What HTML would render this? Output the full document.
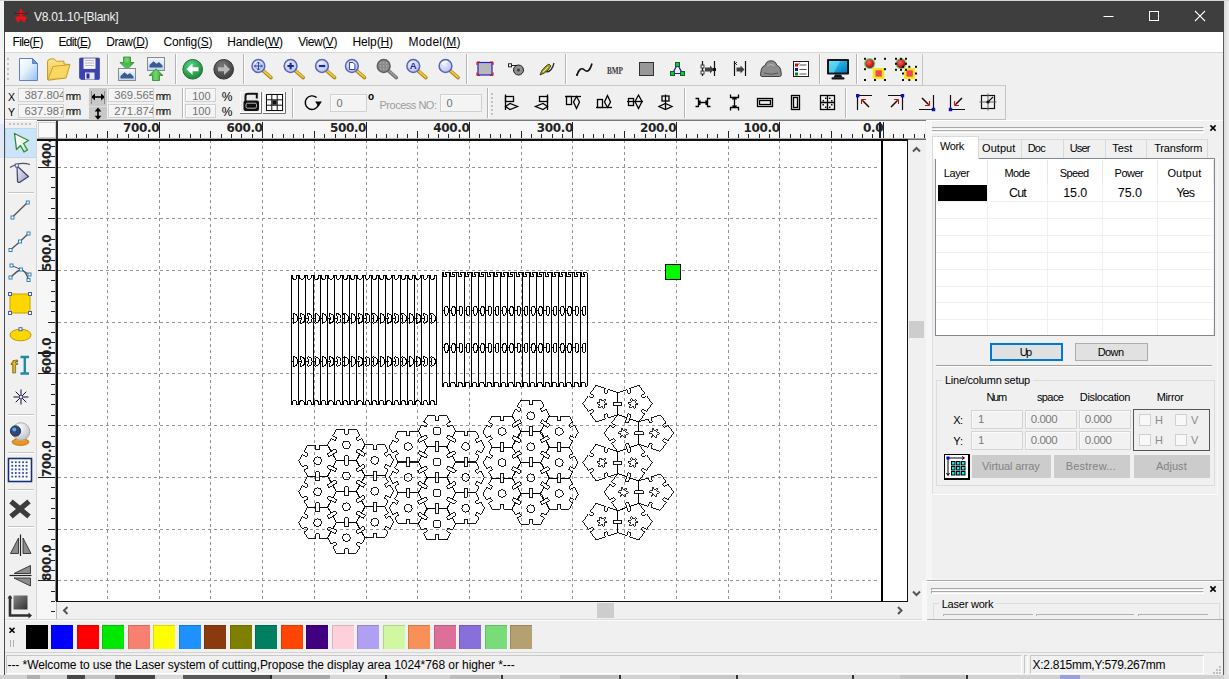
<!DOCTYPE html>
<html><head><meta charset="utf-8"><title>V8.01.10-[Blank]</title>
<style>
*{box-sizing:border-box;margin:0;padding:0}
html,body{width:1229px;height:679px;overflow:hidden;background:#ececec;font-family:"Liberation Sans",sans-serif;font-size:12px;color:#000}
.a{position:absolute}
#win{position:absolute;left:4px;top:1px;width:1220px;height:674px;background:#f0f0f0;border-left:1px solid #4a4a4a;border-right:1px solid #5a5a5a;border-bottom:1px solid #555}
#title{position:absolute;left:4px;top:1px;width:1220px;height:31px;background:#3e3e3e;color:#fff}
#title .t{position:absolute;left:30px;top:8px;font-size:12.4px;letter-spacing:0px;color:#f4f4f4}
#menu{position:absolute;left:5px;top:32px;width:1218px;height:21px;background:#fff;border-bottom:1px solid #d8d8d8}
#menu span{position:absolute;top:3px;font-size:12.4px;white-space:nowrap}
#menu u{text-decoration:underline}
.sep{position:absolute;width:1px;background:#b4b4b4;border-right:1px solid #fff;width:2px}
.inp{position:absolute;background:#f4f4f4;border:1px solid #d0d0d0;color:#707070;font-size:12.5px;overflow:hidden;white-space:nowrap;box-shadow:inset 1px 1px 0 #fafafa}
.lbl{position:absolute;white-space:nowrap}
.tab{position:absolute;top:139px;height:19px;background:#f0f0f0;border:1px solid #d9d9d9;border-bottom:none}
.btn{position:absolute;font-size:11.5px;text-align:center}
.gray{color:#838383}
</style></head>
<body>
<div class="a" style="left:0;top:0;width:1229px;height:679px;background:#efefef"></div>
<div class="a" style="left:0;top:0;width:5px;height:679px;background:#f3f3f3"></div>
<div class="a" style="left:0;top:124px;width:5px;height:34px;background:#dfeaf6"></div>
<div class="a" style="left:1224px;top:0;width:5px;height:679px;background:linear-gradient(90deg,#d8d8d8,#efefef)"></div>
<div class="a" style="left:0;top:675px;width:1229px;height:4px;background:#d2d2d2"></div>
<div class="a" style="left:27px;top:675px;width:13px;height:4px;background:#b0b0b0"></div>
<div class="a" style="left:67px;top:675px;width:18px;height:4px;background:#484848"></div>
<div class="a" style="left:85px;top:675px;width:30px;height:4px;background:#c4c4c4"></div>
<div class="a" style="left:115px;top:675px;width:40px;height:4px;background:#454545"></div>
<div class="a" style="left:157px;top:675px;width:26px;height:4px;background:#dadada"></div>
<div class="a" style="left:183px;top:675px;width:87px;height:4px;background:#585858"></div>
<div class="a" style="left:270px;top:675px;width:2px;height:4px;background:#222"></div>
<div class="a" style="left:272px;top:675px;width:58px;height:4px;background:#a8a8a8"></div>
<div class="a" style="left:330px;top:675px;width:55px;height:4px;background:#d8d8d8"></div>
<div class="a" style="left:385px;top:675px;width:2px;height:4px;background:#333"></div>
<div class="a" style="left:450px;top:675px;width:50px;height:4px;background:#bcbcbc"></div>
<div class="a" style="left:501px;top:675px;width:2px;height:4px;background:#333"></div>
<div class="a" style="left:560px;top:675px;width:58px;height:4px;background:#c0c0c0"></div>
<div class="a" style="left:619px;top:675px;width:2px;height:4px;background:#333"></div>
<div class="a" style="left:680px;top:675px;width:55px;height:4px;background:#c8c8c8"></div>
<div class="a" style="left:736px;top:675px;width:2px;height:4px;background:#333"></div>
<div class="a" style="left:852px;top:675px;width:2px;height:4px;background:#333"></div>
<div class="a" style="left:900px;top:675px;width:65px;height:4px;background:#c4c4c4"></div>
<div class="a" style="left:966px;top:675px;width:2px;height:4px;background:#333"></div>
<div class="a" style="left:1060px;top:675px;width:20px;height:4px;background:#9aa0d8"></div>
<div class="a" style="left:1224px;top:675px;width:5px;height:4px;background:#e4e4e4"></div>
<div class="a" style="left:0;top:0;width:1229px;height:1px;background:#d8d8d0"></div>
<div id="win"></div>
<div id="title"></div>
<div class="lbl" style="left:34.0px;top:10.8px;font-size:12px;line-height:1;letter-spacing:-0.279px;color:#f2f2f2;">V8.01.10-[Blank]</div>
<svg class="a" style="left:12px;top:7px" width="18" height="18" viewBox="0 0 18 18">
<path d="M9 1 L10.5 4.5 L16 6.5 L10.5 7.5 L9.5 9 L15 10 L12 16 L9.6 12 L9 15 L8.4 12 L6 16 L3 10 L8.5 9 L7.5 7.5 L2 6.5 L7.5 4.5 Z" fill="#f01018"/>
<path d="M2 6.3 L16 6.3" stroke="#3a1010" stroke-width="0.8"/></svg>
<svg class="a" style="left:1090px;top:1px" width="134" height="30" viewBox="0 0 134 30">
<path d="M13.5 15.5 H23.5" stroke="#fff" stroke-width="1"/>
<rect x="59.5" y="10.5" width="9" height="9" fill="none" stroke="#fff" stroke-width="1"/>
<path d="M105 10 L115 20 M115 10 L105 20" stroke="#fff" stroke-width="1.1"/></svg>
<div id="menu"></div>
<div class="lbl" style="left:12.5px;top:35.8px;font-size:12px;line-height:1;letter-spacing:-0.630px;color:#000;">File(<u>F</u>)</div>
<div class="lbl" style="left:58.4px;top:35.8px;font-size:12px;line-height:1;letter-spacing:-0.620px;color:#000;">Edit(<u>E</u>)</div>
<div class="lbl" style="left:106.2px;top:35.8px;font-size:12px;line-height:1;letter-spacing:-0.407px;color:#000;">Draw(<u>D</u>)</div>
<div class="lbl" style="left:163.5px;top:35.8px;font-size:12px;line-height:1;letter-spacing:-0.205px;color:#000;">Config(<u>S</u>)</div>
<div class="lbl" style="left:227.3px;top:35.8px;font-size:12px;line-height:1;letter-spacing:-0.195px;color:#000;">Handle(<u>W</u>)</div>
<div class="lbl" style="left:298.2px;top:35.8px;font-size:12px;line-height:1;letter-spacing:-0.427px;color:#000;">View(<u>V</u>)</div>
<div class="lbl" style="left:352.5px;top:35.8px;font-size:12px;line-height:1;letter-spacing:-0.130px;color:#000;">Help(<u>H</u>)</div>
<div class="lbl" style="left:408.5px;top:35.8px;font-size:12px;line-height:1;letter-spacing:0.194px;color:#000;">Model(<u>M</u>)</div>
<div class="a" style="left:5px;top:53px;width:1218px;height:67px;background:#f0f0f0"></div>
<div class="a" style="left:5px;top:85px;width:918px;height:1px;background:#c9c9c9"></div>
<div class="a" style="left:923px;top:85px;width:83px;height:1px;background:#c9c9c9"></div>
<div class="a" style="left:5px;top:119px;width:1000px;height:1px;background:#bdbdbd"></div>
<div class="a" style="left:5px;top:120px;width:1218px;height:1px;background:#fdfdfd"></div>
<div class="a" style="left:922px;top:54px;width:1px;height:31px;background:#c4c4c4"></div>
<div class="a" style="left:1005px;top:86px;width:1px;height:34px;background:#c4c4c4"></div>
<div class="a" style="left:7px;top:58px;width:2px;height:2px;background:#c2c2c2"></div>
<div class="a" style="left:7px;top:63px;width:2px;height:2px;background:#c2c2c2"></div>
<div class="a" style="left:7px;top:68px;width:2px;height:2px;background:#c2c2c2"></div>
<div class="a" style="left:7px;top:73px;width:2px;height:2px;background:#c2c2c2"></div>
<div class="a" style="left:7px;top:78px;width:2px;height:2px;background:#c2c2c2"></div>
<div class="a" style="left:491px;top:93px;width:2px;height:2px;background:#c2c2c2"></div>
<div class="a" style="left:491px;top:97px;width:2px;height:2px;background:#c2c2c2"></div>
<div class="a" style="left:491px;top:101px;width:2px;height:2px;background:#c2c2c2"></div>
<div class="a" style="left:491px;top:105px;width:2px;height:2px;background:#c2c2c2"></div>
<div class="a" style="left:491px;top:109px;width:2px;height:2px;background:#c2c2c2"></div>
<div class="a" style="left:491px;top:113px;width:2px;height:2px;background:#c2c2c2"></div>
<div class="sep" style="left:107px;top:54px;height:30px"></div>
<div class="sep" style="left:175px;top:54px;height:30px"></div>
<div class="sep" style="left:243px;top:54px;height:30px"></div>
<div class="sep" style="left:466px;top:54px;height:30px"></div>
<div class="sep" style="left:565px;top:54px;height:30px"></div>
<div class="sep" style="left:819px;top:54px;height:30px"></div>
<div class="sep" style="left:856px;top:54px;height:30px"></div>
<div class="sep" style="left:182px;top:88px;height:30px"></div>
<div class="sep" style="left:292px;top:88px;height:30px"></div>
<div class="sep" style="left:487px;top:88px;height:30px"></div>
<div class="sep" style="left:684px;top:88px;height:30px"></div>
<div class="sep" style="left:845px;top:88px;height:30px"></div>
<svg class="a" style="left:0;top:0" width="1229" height="125" viewBox="0 0 1229 125">
<defs>
<linearGradient id="docg" x1="0" y1="0" x2="1" y2="1"><stop offset="0" stop-color="#ffffff"/><stop offset="0.45" stop-color="#e4f0fc"/><stop offset="1" stop-color="#8cc0ee"/></linearGradient>
<linearGradient id="folg" x1="0" y1="0" x2="0" y2="1"><stop offset="0" stop-color="#fbe48a"/><stop offset="1" stop-color="#f0c040"/></linearGradient>
<radialGradient id="lensg" cx="0.4" cy="0.35" r="0.7"><stop offset="0" stop-color="#f0f2ff"/><stop offset="1" stop-color="#b4bcf0"/></radialGradient>
<radialGradient id="grng" cx="0.4" cy="0.3" r="0.8"><stop offset="0" stop-color="#58d088"/><stop offset="0.6" stop-color="#2ea050"/><stop offset="1" stop-color="#1c7838"/></radialGradient>
<radialGradient id="gryg" cx="0.4" cy="0.3" r="0.8"><stop offset="0" stop-color="#787878"/><stop offset="0.6" stop-color="#505050"/><stop offset="1" stop-color="#383838"/></radialGradient>
<linearGradient id="arrg" x1="0" y1="0" x2="1" y2="0"><stop offset="0" stop-color="#3aa03a"/><stop offset="0.5" stop-color="#70d868"/><stop offset="1" stop-color="#2a902a"/></linearGradient>
<linearGradient id="skyg" x1="0" y1="0" x2="0" y2="1"><stop offset="0" stop-color="#f4f8ff"/><stop offset="1" stop-color="#c0d4f0"/></linearGradient>
<linearGradient id="mong" x1="0" y1="0" x2="1" y2="1"><stop offset="0" stop-color="#50d8f8"/><stop offset="0.5" stop-color="#18a8e0"/><stop offset="1" stop-color="#0878c0"/></linearGradient>
<radialGradient id="redg" cx="0.4" cy="0.35" r="0.7"><stop offset="0" stop-color="#ff6060"/><stop offset="1" stop-color="#a00000"/></radialGradient>
</defs>
<path d="M19.5 58.5 H32.5 L37.5 63.5 V80.5 H19.5 Z" fill="url(#docg)" stroke="#6080c0" stroke-width="1"/><path d="M32.5 58.5 V63.5 H37.5 Z" fill="#6a94d8" stroke="#5070b8" stroke-width="0.8"/>
<path d="M47.5 79.5 V62 Q47.5 59.5 50 59 L54 58.8 L56.5 61.2 H64 V64 L70 64.5 L66 78 L48.5 80.2 Z" fill="url(#folg)" stroke="#c49a28" stroke-width="1"/><path d="M48 79.5 L53 66.5 L69.5 64.8" fill="none" stroke="#c49a28" stroke-width="0.9"/><path d="M49 78 L53.6 67.2 L68.6 65.6 L65.4 77.2 Z" fill="#f8d860"/>
<path d="M79.5 59 Q79.5 58 80.5 58 H98.5 Q99.5 58 99.5 59 V78.5 Q99.5 79.5 98.5 79.5 H81 L79.5 78 Z" fill="#3c42b0" stroke="#2c3090" stroke-width="0.6"/><rect x="83.5" y="58.4" width="12" height="10.5" fill="#f4f4fa"/><path d="M85 60.5 H94 M85 63 H94 M85 65.5 H94" stroke="#b8b8c8" stroke-width="1"/><rect x="85" y="72.5" width="9.5" height="7" fill="#e8e8f4"/><rect x="86.5" y="73.5" width="3" height="5" fill="#2c3090"/>
<path d="M123.5 57 H130.5 V62.5 H134 L127 69.5 L120 62.5 H123.5 Z" fill="url(#arrg)" stroke="#2a8a2a" stroke-width="0.8"/><rect x="118.5" y="68.5" width="17" height="12" fill="url(#skyg)" stroke="#8a8a8a" stroke-width="1"/><path d="M120.5 78.5 V76 L124.5 72.2 L127.5 74.8 L130 73 L133.5 76.4 V78.5 Z" fill="#3a5a90"/><path d="M123.5 62.5 H130.5 L127 68.5 Z" fill="#48b848" />
<rect x="147.5" y="57.5" width="17" height="13" fill="url(#skyg)" stroke="#8a8a8a" stroke-width="1"/><path d="M149.5 67.5 V65 L153.5 61.2 L156.5 63.8 L159 62 L162.5 65.4 V67.5 Z" fill="#3a5a90"/><path d="M152.5 80.5 H159.5 V75.5 H163 L156 68.8 L149 75.5 H152.5 Z" fill="url(#arrg)" stroke="#2a8a2a" stroke-width="0.8"/>
<circle cx="192.7" cy="69.3" r="9.8" fill="url(#grng)" stroke="#1c6c34" stroke-width="1"/><path d="M186.5 69.3 L192.5 63.5 V67.3 H198.5 V71.3 H192.5 V75.1 Z" fill="#fff"/>
<circle cx="223.7" cy="69.3" r="9.8" fill="url(#gryg)" stroke="#303030" stroke-width="1"/><path d="M230 69.3 L224 63.5 V67.3 H218 V71.3 H224 V75.1 Z" fill="#b8b8b8"/>
<g transform="translate(258.4,66)"><path d="M4.6 4.6 L12.6 11.6" stroke="#b08818" stroke-width="3.6" stroke-linecap="round"/><path d="M5.4 5 L12.4 11.2" stroke="#f0c840" stroke-width="1.8" stroke-linecap="round"/><circle cx="0" cy="0" r="6.4" fill="url(#lensg)" stroke="#5666b8" stroke-width="1.5"/><path d="M-4 0 H4 M0 -4 V4 M-4 0 l1.5 -1.5 M-4 0 l1.5 1.5 M4 0 l-1.5 -1.5 M4 0 l-1.5 1.5 M0 -4 l-1.5 1.5 M0 -4 l1.5 1.5 M0 4 l-1.5 -1.5 M0 4 l1.5 -1.5" stroke="#2040a0" stroke-width="1" fill="none"/></g>
<g transform="translate(290.6,66)"><path d="M4.6 4.6 L12.6 11.6" stroke="#b08818" stroke-width="3.6" stroke-linecap="round"/><path d="M5.4 5 L12.4 11.2" stroke="#f0c840" stroke-width="1.8" stroke-linecap="round"/><circle cx="0" cy="0" r="6.4" fill="url(#lensg)" stroke="#5666b8" stroke-width="1.5"/><path d="M-3.2 0 H3.2 M0 -3.2 V3.2" stroke="#1c2c98" stroke-width="2.2"/></g>
<g transform="translate(322,66)"><path d="M4.6 4.6 L12.6 11.6" stroke="#b08818" stroke-width="3.6" stroke-linecap="round"/><path d="M5.4 5 L12.4 11.2" stroke="#f0c840" stroke-width="1.8" stroke-linecap="round"/><circle cx="0" cy="0" r="6.4" fill="url(#lensg)" stroke="#5666b8" stroke-width="1.5"/><path d="M-3.2 0 H3.2" stroke="#1c2c98" stroke-width="2.2"/></g>
<g transform="translate(351.9,66)"><path d="M4.6 4.6 L12.6 11.6" stroke="#b08818" stroke-width="3.6" stroke-linecap="round"/><path d="M5.4 5 L12.4 11.2" stroke="#f0c840" stroke-width="1.8" stroke-linecap="round"/><circle cx="0" cy="0" r="6.4" fill="url(#lensg)" stroke="#5666b8" stroke-width="1.5"/><path d="M-2.5 -3.5 H1 L3 -1.5 V3.5 H-2.5 Z" fill="#fff" stroke="#2c3ca0" stroke-width="1"/></g>
<g transform="translate(383.7,66)"><path d="M4.6 4.6 L12.6 11.6" stroke="#707070" stroke-width="3.6" stroke-linecap="round"/><path d="M5.4 5 L12.4 11.2" stroke="#9a9a9a" stroke-width="1.8" stroke-linecap="round"/><circle cx="0" cy="0" r="6.4" fill="#8a8a8a" stroke="#606060" stroke-width="1.5"/><rect x="-3.5" y="-3.5" width="1" height="1" fill="#c8c8c8"/><rect x="-3.5" y="-0.5" width="1" height="1" fill="#c8c8c8"/><rect x="-3.5" y="2.5" width="1" height="1" fill="#c8c8c8"/><rect x="-0.5" y="-3.5" width="1" height="1" fill="#c8c8c8"/><rect x="-0.5" y="-0.5" width="1" height="1" fill="#c8c8c8"/><rect x="-0.5" y="2.5" width="1" height="1" fill="#c8c8c8"/><rect x="2.5" y="-3.5" width="1" height="1" fill="#c8c8c8"/><rect x="2.5" y="-0.5" width="1" height="1" fill="#c8c8c8"/><rect x="2.5" y="2.5" width="1" height="1" fill="#c8c8c8"/></g>
<g transform="translate(413.3,66)"><path d="M4.6 4.6 L12.6 11.6" stroke="#b08818" stroke-width="3.6" stroke-linecap="round"/><path d="M5.4 5 L12.4 11.2" stroke="#f0c840" stroke-width="1.8" stroke-linecap="round"/><circle cx="0" cy="0" r="6.4" fill="url(#lensg)" stroke="#5666b8" stroke-width="1.5"/><text x="0" y="3.4" font-family="Liberation Sans,sans-serif" font-weight="bold" font-size="9.5" text-anchor="middle" fill="#1c2c98">A</text></g>
<g transform="translate(445.5,66)"><path d="M4.6 4.6 L12.6 11.6" stroke="#b08818" stroke-width="3.6" stroke-linecap="round"/><path d="M5.4 5 L12.4 11.2" stroke="#f0c840" stroke-width="1.8" stroke-linecap="round"/><circle cx="0" cy="0" r="6.4" fill="url(#lensg)" stroke="#5666b8" stroke-width="1.5"/><path d="M-3.5 -2 Q-1 -5 2 -4" stroke="#fff" stroke-width="1.5" fill="none"/></g>
<rect x="478" y="62.5" width="14" height="12.5" fill="#b8b8b8" stroke="#2020d0" stroke-width="1.2"/><path d="M477 62 h3 M477 62 v3 M493 62 h-3 M493 62 v3 M477 75.5 h3 M477 75.5 v-3 M493 75.5 h-3 M493 75.5 v-3" stroke="#e01010" stroke-width="1.2"/>
<circle cx="518.5" cy="70" r="5" fill="#909090" stroke="#202020" stroke-width="1"/><circle cx="518.5" cy="70" r="1.6" fill="#404040"/><path d="M510 65.5 H517" stroke="#202020" stroke-width="1"/><rect x="508.5" y="63.8" width="3" height="3" fill="#fff" stroke="#202020" stroke-width="1"/>
<path d="M540 75 Q541 70 546 66 L549 64 L551 66 L548 70 Q544 74 540 75 Z" fill="#a8a020" stroke="#3a3a10" stroke-width="0.9"/><path d="M546 72 Q552 72 554 63" fill="none" stroke="#202020" stroke-width="1.2"/><path d="M543 72 L548 67" stroke="#f0f0a0" stroke-width="1"/>
<path d="M577 75 Q580 66 584.5 70 Q589 74 592 63.5" fill="none" stroke="#101010" stroke-width="1.6"/><circle cx="577" cy="75" r="1.1" fill="#101010"/>
<text x="615" y="73.5" font-family="Liberation Serif,serif" font-weight="bold" font-size="10" text-anchor="middle" fill="#383838" textLength="16" lengthAdjust="spacingAndGlyphs">BMP</text>
<rect x="639.5" y="62.5" width="14" height="13" fill="#989898" stroke="#303030" stroke-width="1"/>
<path d="M677.5 64.5 L672.5 73.5 H682.5 Z" fill="none" stroke="#1818d0" stroke-width="1.2"/><rect x="675.5" y="62.5" width="4" height="4" fill="#20c040" stroke="#106020" stroke-width="1"/><rect x="670.5" y="71.5" width="4" height="4" fill="#20c040" stroke="#106020" stroke-width="1"/><rect x="680.5" y="71.5" width="4" height="4" fill="#20c040" stroke="#106020" stroke-width="1"/>
<path d="M702.5 61 V76 M714.5 61 V76" stroke="#101010" stroke-width="1.2"/><path d="M705 67.5 H710 V65.5 L714 69.5 L710 73.5 V71.5 H705 Z" fill="#404040"/><rect x="701" y="65" width="3" height="3" fill="#fff" stroke="#101010" stroke-width="0.8"/><rect x="701" y="71" width="3" height="3" fill="#fff" stroke="#101010" stroke-width="0.8"/><rect x="713" y="68" width="3" height="3" fill="#101010"/>
<path d="M734.5 61 V76 M745.5 61 V76" stroke="#101010" stroke-width="1.2"/><path d="M736.5 67.5 H740.5 V65.5 L744.5 69.5 L740.5 73.5 V71.5 H736.5 Z" fill="#404040"/><path d="M734 62 l3 3 M737 62 l-3 3" stroke="#101010" stroke-width="0.8"/>
<path d="M762 76.5 Q760 76.5 760.5 73.5 L761.5 69 Q762.5 66 765 65.5 L766.5 62.5 Q768 60.8 771 60.8 Q774 60.8 775.5 62.5 L777 65.5 Q779.5 66 780.5 69 L781.3 73.5 Q781.8 76.5 779.5 76.5 Z" fill="#8c8c8c" stroke="#404040" stroke-width="1"/><path d="M764 73 Q771 75.5 778 73" fill="none" stroke="#505050" stroke-width="0.9"/><path d="M767.5 65.5 Q771 63.5 774.5 65.5" fill="none" stroke="#b8b8b8" stroke-width="1"/>
<rect x="793.5" y="61.5" width="15" height="15" fill="#fff" stroke="#202020" stroke-width="1"/><path d="M799.5 65 H806.5 M799.5 69.5 H806.5 M799.5 74 H806.5" stroke="#404040" stroke-width="0.9"/><rect x="795" y="63.5" width="3" height="3" fill="#c01010"/><rect x="795" y="68" width="3" height="3" fill="#1010c0"/><rect x="795" y="72.5" width="3" height="3" fill="#108010"/><path d="M795.5 64.5 l1.5 1.5 l3 -3.5" stroke="#c01010" stroke-width="0.8" fill="none"/>
<rect x="827" y="59" width="22" height="15.5" rx="1" fill="#101418"/><rect x="829" y="61" width="18" height="11.5" fill="url(#mong)"/><path d="M829 61 H840 L834 72.5 H829 Z" fill="#7ae4fc" opacity="0.55"/><path d="M835 74.5 H841 L842.5 77.5 H833.5 Z" fill="#101418"/><rect x="831.5" y="77.3" width="13" height="2.2" rx="1" fill="#101418"/>
<circle cx="869.7" cy="63.6" r="5.6" fill="#48c848" opacity="0.8"/><circle cx="869.7" cy="63.6" r="4.4" fill="url(#redg)"/><rect x="872.8" y="68" width="11.5" height="11" fill="#f8e418"/><rect x="875.5" y="70.3" width="6.3" height="6.3" fill="#f04850"/><rect x="864.0" y="57.8" width="2" height="2" fill="#101010"/><rect x="864.0" y="68.2" width="2" height="2" fill="#101010"/><rect x="864.0" y="79.0" width="2" height="2" fill="#101010"/><rect x="874.0" y="57.8" width="2" height="2" fill="#101010"/><rect x="874.0" y="79.0" width="2" height="2" fill="#101010"/><rect x="884.0" y="57.8" width="2" height="2" fill="#101010"/><rect x="884.0" y="68.2" width="2" height="2" fill="#101010"/><rect x="884.0" y="79.0" width="2" height="2" fill="#101010"/>
<circle cx="901" cy="63.6" r="5.6" fill="#48c848" opacity="0.8"/><circle cx="901" cy="63.6" r="4.4" fill="url(#redg)"/><rect x="904" y="68" width="11" height="11" fill="#f8e418"/><rect x="906.5" y="70.3" width="6.3" height="6.3" fill="#f04850"/><rect x="895.0" y="57.8" width="2" height="2" fill="#101010"/><rect x="895.0" y="62.8" width="2" height="2" fill="#101010"/><rect x="895.0" y="68.8" width="2" height="2" fill="#101010"/><rect x="900.0" y="57.8" width="2" height="2" fill="#101010"/><rect x="900.0" y="68.8" width="2" height="2" fill="#101010"/><rect x="905.0" y="57.8" width="2" height="2" fill="#101010"/><rect x="905.0" y="62.8" width="2" height="2" fill="#101010"/><rect x="905.0" y="68.8" width="2" height="2" fill="#101010"/><rect x="902.0" y="65.8" width="2" height="2" fill="#101010"/><rect x="902.0" y="72.5" width="2" height="2" fill="#101010"/><rect x="902.0" y="79.0" width="2" height="2" fill="#101010"/><rect x="908.3" y="65.8" width="2" height="2" fill="#101010"/><rect x="908.3" y="79.0" width="2" height="2" fill="#101010"/><rect x="915.0" y="65.8" width="2" height="2" fill="#101010"/><rect x="915.0" y="72.5" width="2" height="2" fill="#101010"/><rect x="915.0" y="79.0" width="2" height="2" fill="#101010"/>
<rect x="240.5" y="92.5" width="20" height="20" fill="#ececec" stroke="#fff" stroke-width="1"/><path d="M240 113.5 H261.5 V92" fill="none" stroke="#707070" stroke-width="1"/><rect x="243.5" y="100.5" width="15.5" height="10.5" rx="2" fill="#101010"/><rect x="246" y="103.2" width="10.5" height="5" rx="1.5" fill="none" stroke="#c8c8c8" stroke-width="0.9"/><path d="M245.5 101 V96 Q245.5 93.8 248 93.8 H256.8 V98.5" fill="none" stroke="#101010" stroke-width="2"/>
<rect x="263.5" y="92.5" width="21" height="20" fill="#ececec" stroke="#fff" stroke-width="1"/><path d="M263 113.5 H285.5 V92" fill="none" stroke="#707070" stroke-width="1"/><rect x="266.5" y="94.5" width="16" height="16" fill="#fff" stroke="#101010" stroke-width="1"/><path d="M271.8 94.5 V110.5 M277.2 94.5 V110.5 M266.5 99.8 H282.5 M266.5 105.2 H282.5" stroke="#101010" stroke-width="1"/><rect x="272.3" y="100.3" width="4.4" height="4.4" fill="#101010"/>
<path d="M318.3 105.3 A6.8 6.8 0 1 1 316.6 97.6" fill="none" stroke="#000" stroke-width="1.4"/><path d="M315.2 101.6 L321.8 101.6 L318.5 106.8 Z" fill="#000"/>
<g fill="none" stroke="#000" stroke-width="1.3"><path d="M505.5 94.5 V110"/><rect x="505.5" y="96.5" width="8" height="5"/><path d="M505.5 106.5 L510 103.5 L517.5 106.5 L510 109.5 Z"/></g>
<g fill="none" stroke="#000" stroke-width="1.3"><path d="M547.5 94.5 V110"/><rect x="539.5" y="96.5" width="8" height="5"/><path d="M547.5 106.5 L543 103.5 L535.5 106.5 L543 109.5 Z"/></g>
<g fill="none" stroke="#000" stroke-width="1.3"><path d="M565 96.5 H581"/><rect x="566.5" y="96.5" width="5" height="8"/><path d="M576.5 96.5 L579.5 102 L576.5 108.5 L573.5 102 Z"/></g>
<g fill="none" stroke="#000" stroke-width="1.3"><path d="M596 107.5 H612"/><rect x="597.5" y="99.5" width="5" height="8"/><path d="M607.5 107.5 L610.5 102 L607.5 95.5 L604.5 102 Z"/></g>
<g fill="none" stroke="#000" stroke-width="1.3"><path d="M627 101.5 H643"/><rect x="628.5" y="98.5" width="5" height="7"/><path d="M638.5 95 L642 101.5 L638.5 108.5 L635 101.5 Z"/></g>
<g fill="none" stroke="#000" stroke-width="1.3"><path d="M665.5 94.5 V110"/><rect x="662" y="96" width="7" height="5"/><path d="M665.5 103.5 L672 106.5 L665.5 109.5 L659 106.5 Z"/></g>
<g fill="none" stroke="#000" stroke-width="1.3"><path d="M695.5 98.5 H698.5 V106.5 H695.5 M710.5 98.5 H707.5 V106.5 H710.5 M698.5 102.5 H707.5 M700.5 100.5 L698.5 102.5 L700.5 104.5 M705.5 100.5 L707.5 102.5 L705.5 104.5"/></g>
<g fill="none" stroke="#000" stroke-width="1.3"><path d="M730.5 94.5 V97.5 H738.5 V94.5 M730.5 110.5 V107.5 H738.5 V110.5 M734.5 97.5 V107.5 M732.5 99.5 L734.5 97.5 L736.5 99.5 M732.5 105.5 L734.5 107.5 L736.5 105.5"/></g>
<g fill="none" stroke="#000" stroke-width="1.3"><rect x="757.5" y="98.5" width="15" height="8"/><rect x="759.5" y="100.5" width="11" height="4"/></g>
<g fill="none" stroke="#000" stroke-width="1.3"><rect x="791.5" y="95.5" width="8" height="14"/><rect x="793.5" y="97.5" width="4" height="10"/></g>
<g fill="none" stroke="#000" stroke-width="1.3"><rect x="820.5" y="95.5" width="14" height="14"/><path d="M827.5 95.5 V109.5 M820.5 102.5 H834.5"/></g><g fill="#101010"><rect x="822.5" y="100" width="1.5" height="1.5"/><rect x="831" y="100" width="1.5" height="1.5"/><rect x="822.5" y="104" width="1.5" height="1.5"/><rect x="831" y="104" width="1.5" height="1.5"/><rect x="825" y="97.5" width="1.5" height="1.5"/><rect x="829" y="97.5" width="1.5" height="1.5"/><rect x="825" y="106.5" width="1.5" height="1.5"/><rect x="829" y="106.5" width="1.5" height="1.5"/></g>
<path d="M857.5 110 V95.5 H872" fill="none" stroke="#101010" stroke-width="1.2"/><rect x="856" y="94" width="3.4" height="3.4" fill="#1010c0"/><path d="M869 107 L861.5 99.5 M861.5 99.5 V104 M861.5 99.5 H866" fill="none" stroke="#c01010" stroke-width="1.1"/><path d="M869 107 L863 101" stroke="#101010" stroke-width="1.1"/>
<path d="M888 95.5 H902.5 V110" fill="none" stroke="#101010" stroke-width="1.2"/><rect x="900.8" y="94" width="3.4" height="3.4" fill="#1010c0"/><path d="M891 107 L898.5 99.5 M898.5 99.5 V104 M898.5 99.5 H894" fill="none" stroke="#c01010" stroke-width="1.1"/><path d="M891 107 L897 101" stroke="#101010" stroke-width="1.1"/>
<path d="M919 109.5 H933.5 V95" fill="none" stroke="#101010" stroke-width="1.2"/><rect x="931.8" y="107.8" width="3.4" height="3.4" fill="#1010c0"/><path d="M922 98 L929.5 105.5 M929.5 105.5 V101 M929.5 105.5 H925" fill="none" stroke="#c01010" stroke-width="1.1"/><path d="M922 98 L928 104" stroke="#101010" stroke-width="1.1"/>
<path d="M950.5 95 V109.5 H965" fill="none" stroke="#101010" stroke-width="1.2"/><rect x="948.8" y="107.8" width="3.4" height="3.4" fill="#1010c0"/><path d="M962 98 L954.5 105.5 M954.5 105.5 V101 M954.5 105.5 H959" fill="none" stroke="#c01010" stroke-width="1.1"/><path d="M962 98 L956 104" stroke="#101010" stroke-width="1.1"/>
<rect x="981.5" y="95.5" width="13" height="13" fill="none" stroke="#101010" stroke-width="1.2"/><path d="M988 93.5 V110.5 M979.5 102 H996.5" stroke="#606060" stroke-width="1"/><circle cx="988" cy="102" r="1.6" fill="#101010"/><path d="M988 102 L993 97" stroke="#101010" stroke-width="1.1"/>
</svg>
<div class="lbl" style="left:7.9px;top:91.9px;font-size:10.5px;line-height:1;letter-spacing:0.000px;color:#000;">X</div>
<div class="lbl" style="left:7.9px;top:106.9px;font-size:10.5px;line-height:1;letter-spacing:0.000px;color:#000;">Y</div>
<div class="inp" style="left:18px;top:88px;width:46px;height:14px"><span style="position:absolute;left:5.5px;top:1.4px;font-size:11.3px;line-height:1;width:38.3px;overflow:hidden;">387.804</span></div>
<div class="inp" style="left:18px;top:104px;width:46px;height:14px"><span style="position:absolute;left:5.5px;top:1.0px;font-size:11.3px;line-height:1;width:38.3px;overflow:hidden;">637.987</span></div>
<div class="lbl" style="left:65.8px;top:91.5px;font-size:10px;line-height:1;letter-spacing:-1.500px;color:#000;">mm</div>
<div class="lbl" style="left:65.8px;top:107.1px;font-size:10px;line-height:1;letter-spacing:-1.500px;color:#000;">mm</div>
<div class="a" style="left:89px;top:88px;width:18px;height:32px;background:#c9c9c9"></div>
<div class="a" style="left:89px;top:106px;width:18px;height:1px;background:#dcdcdc"></div>
<svg class="a" style="left:89px;top:88px" width="18" height="32" viewBox="0 0 18 32">
<path d="M3 9 H15" stroke="#000" stroke-width="1.6" fill="none"/><path d="M2 9 L6 5.6 V12.4 Z M16 9 L12 5.6 V12.4 Z" fill="#000"/>
<path d="M2.5 3 V16 M15.5 3 V16" stroke="#8a8a8a" stroke-width="1"/>
<path d="M9 21 V30" stroke="#000" stroke-width="1.6" fill="none"/><path d="M9 19.5 L5.6 23.5 H12.4 Z M9 31.8 L5.6 27.8 H12.4 Z" fill="#000"/>
</svg>
<div class="inp" style="left:108px;top:88px;width:46px;height:14px"><span style="position:absolute;left:5.3px;top:1.4px;font-size:11.3px;line-height:1;width:38.5px;overflow:hidden;">369.565</span></div>
<div class="inp" style="left:108px;top:104px;width:46px;height:14px"><span style="position:absolute;left:5.3px;top:1.0px;font-size:11.3px;line-height:1;width:38.5px;overflow:hidden;">271.874</span></div>
<div class="lbl" style="left:155.8px;top:91.5px;font-size:10px;line-height:1;letter-spacing:-1.500px;color:#000;">mm</div>
<div class="lbl" style="left:155.8px;top:107.1px;font-size:10px;line-height:1;letter-spacing:-1.500px;color:#000;">mm</div>
<div class="inp" style="left:185px;top:88px;width:31px;height:14px"><span style="position:absolute;left:6.2px;top:1.7px;font-size:11px;line-height:1;">100</span></div>
<div class="inp" style="left:185px;top:104px;width:31px;height:14px"><span style="position:absolute;left:6.2px;top:1.3px;font-size:11px;line-height:1;">100</span></div>
<div class="lbl" style="left:221.7px;top:90.6px;font-size:12px;line-height:1;letter-spacing:0.000px;color:#000;">%</div>
<div class="lbl" style="left:221.7px;top:106.2px;font-size:12px;line-height:1;letter-spacing:0.000px;color:#000;">%</div>
<div class="inp" style="left:330px;top:94px;width:37px;height:18px"><span style="position:absolute;left:5.5px;top:3.2px;font-size:11px;line-height:1;">0</span></div>
<div class="lbl" style="left:368.0px;top:92.0px;font-size:10px;line-height:1;letter-spacing:0.000px;color:#000;font-weight:bold;">o</div>
<div class="lbl" style="left:379.5px;top:99.7px;font-size:11px;line-height:1;letter-spacing:-0.487px;color:#9c9c9c;">Process NO:</div>
<div class="inp" style="left:440px;top:94px;width:42px;height:18px"><span style="position:absolute;left:5.5px;top:3.2px;font-size:11px;line-height:1;">0</span></div>
<div class="a" style="left:5px;top:121px;width:32px;height:498px;background:#f0f0f0"></div>
<div class="a" style="left:9px;top:123px;width:2px;height:2px;background:#c2c2c2"></div>
<div class="a" style="left:13px;top:123px;width:2px;height:2px;background:#c2c2c2"></div>
<div class="a" style="left:17px;top:123px;width:2px;height:2px;background:#c2c2c2"></div>
<div class="a" style="left:21px;top:123px;width:2px;height:2px;background:#c2c2c2"></div>
<div class="a" style="left:25px;top:123px;width:2px;height:2px;background:#c2c2c2"></div>
<div class="a" style="left:29px;top:123px;width:2px;height:2px;background:#c2c2c2"></div>
<div class="a" style="left:5px;top:128px;width:32px;height:30px;background:#cce4f7;border:1px solid #bcd8ef"></div>
<svg class="a" style="left:0;top:120px" width="40" height="500" viewBox="0 120 40 500">
<defs><linearGradient id="curg" x1="0" y1="0" x2="1" y2="1"><stop offset="0" stop-color="#ffffff"/><stop offset="0.5" stop-color="#f0fff0"/><stop offset="1" stop-color="#a0e0a0"/></linearGradient>
<linearGradient id="ndg" x1="0" y1="0" x2="1" y2="1"><stop offset="0" stop-color="#f0f0ff"/><stop offset="1" stop-color="#9898c8"/></linearGradient>
<linearGradient id="sqg" x1="0" y1="0" x2="1" y2="1"><stop offset="0" stop-color="#888"/><stop offset="1" stop-color="#303030"/></linearGradient>
<radialGradient id="camg" cx="0.4" cy="0.3" r="0.8"><stop offset="0" stop-color="#ffffff"/><stop offset="1" stop-color="#b8b8c0"/></radialGradient></defs>
<path d="M14.5 133.5 L28.5 140.5 L23.5 143.5 L27.5 150 L24 152 L20.5 145.5 L16.5 149.5 Z" fill="url(#curg)" stroke="#2f8a3a" stroke-width="1.3" stroke-linejoin="round"/>
<path d="M10 167.5 Q20 161 30 164.5" fill="none" stroke="#505060" stroke-width="1.2"/><path d="M17 166 L28.5 176.5 L19.5 182.5 Q17 182.5 17.5 180 Z" fill="url(#ndg)" stroke="#404058" stroke-width="1.2" stroke-linejoin="round"/><rect x="15.3" y="164.0" width="3" height="3" fill="#fff" stroke="#5060a0" stroke-width="1"/>
<path d="M8 192.5 H34" stroke="#c4c4c4" stroke-width="1"/><path d="M8 193.5 H34" stroke="#fff" stroke-width="1"/>
<path d="M8 414.5 H34" stroke="#c4c4c4" stroke-width="1"/><path d="M8 415.5 H34" stroke="#fff" stroke-width="1"/>
<path d="M8 452.5 H34" stroke="#c4c4c4" stroke-width="1"/><path d="M8 453.5 H34" stroke="#fff" stroke-width="1"/>
<path d="M8 489.5 H34" stroke="#c4c4c4" stroke-width="1"/><path d="M8 490.5 H34" stroke="#fff" stroke-width="1"/>
<path d="M8 526.5 H34" stroke="#c4c4c4" stroke-width="1"/><path d="M8 527.5 H34" stroke="#fff" stroke-width="1"/>
<path d="M12.5 217 L27.5 202.5" stroke="#505060" stroke-width="1.3"/><rect x="11.0" y="216.0" width="3" height="3" fill="#fff" stroke="#3080b0" stroke-width="1"/><rect x="26.3" y="201.0" width="3" height="3" fill="#fff" stroke="#3080b0" stroke-width="1"/>
<path d="M10.5 250 L20 241.5 L28.5 233.5" stroke="#505060" stroke-width="1.3" fill="none"/><rect x="9.0" y="248.5" width="3" height="3" fill="#fff" stroke="#3080b0" stroke-width="1"/><rect x="18.5" y="240.0" width="3" height="3" fill="#fff" stroke="#3080b0" stroke-width="1"/><rect x="27.0" y="232.0" width="3" height="3" fill="#fff" stroke="#3080b0" stroke-width="1"/>
<path d="M10.5 277.5 Q18 270 21 269.5 Q26 271 28.5 280" stroke="#505060" stroke-width="1.3" fill="none"/><path d="M11.5 265.5 L21 269.5 L29.5 274.5" stroke="#505060" stroke-width="1" fill="none"/><rect x="9.0" y="276.0" width="3" height="3" fill="#fff" stroke="#3080b0" stroke-width="1"/><rect x="10.0" y="264.0" width="3" height="3" fill="#fff" stroke="#3080b0" stroke-width="1"/><rect x="19.5" y="268.0" width="3" height="3" fill="#fff" stroke="#3080b0" stroke-width="1"/><rect x="28.0" y="273.0" width="3" height="3" fill="#fff" stroke="#3080b0" stroke-width="1"/><rect x="27.0" y="278.5" width="3" height="3" fill="#fff" stroke="#3080b0" stroke-width="1"/>
<rect x="10" y="294" width="20" height="19" fill="#ffd700" stroke="#c8a000" stroke-width="1"/><rect x="8.5" y="292.5" width="3" height="3" fill="#fff" stroke="#4060c0" stroke-width="1"/><rect x="28.5" y="292.5" width="3" height="3" fill="#fff" stroke="#4060c0" stroke-width="1"/><rect x="8.5" y="311.5" width="3" height="3" fill="#fff" stroke="#4060c0" stroke-width="1"/><rect x="28.5" y="311.5" width="3" height="3" fill="#fff" stroke="#4060c0" stroke-width="1"/>
<ellipse cx="20.5" cy="335" rx="10.5" ry="5.8" fill="#ffd700" stroke="#c89000" stroke-width="1"/><rect x="19.0" y="327.7" width="3" height="3" fill="#fff" stroke="#4060c0" stroke-width="1"/>
<text x="11" y="373" font-family="Liberation Sans,sans-serif" font-weight="bold" font-size="19" fill="#f0c818" stroke="#504000" stroke-width="0.7">f</text><path d="M20.5 357 H29 M20.5 373.5 H29 M24.8 357 V373.5" stroke="#2088a8" stroke-width="2.4" fill="none"/>
<path d="M21 389.5 V404.5 M13.5 397 H28.5 M15.7 391.7 L26.3 402.3 M26.3 391.7 L15.7 402.3" stroke="#101030" stroke-width="1"/><circle cx="21" cy="397" r="1.6" fill="#fff" stroke="#4040a0" stroke-width="0.8"/>
<ellipse cx="20.5" cy="442" rx="8.5" ry="3.4" fill="#e89820" stroke="#b06c10" stroke-width="0.8"/><rect x="16.5" y="436" width="8" height="5" fill="#f0a830"/><circle cx="21" cy="431.5" r="8.8" fill="url(#camg)" stroke="#a0a0a8" stroke-width="0.8"/><circle cx="15.5" cy="431" r="5.2" fill="#304878" stroke="#182848" stroke-width="0.8"/><circle cx="14.3" cy="429.6" r="2" fill="#60a8e8"/>
<rect x="8.5" y="458.5" width="23" height="23" fill="#fff" stroke="#183078" stroke-width="1.6"/>
<rect x="11.3" y="461.3" width="1.8" height="1.8" fill="#2848b0"/><rect x="11.3" y="464.9" width="1.8" height="1.8" fill="#2848b0"/><rect x="11.3" y="468.5" width="1.8" height="1.8" fill="#2848b0"/><rect x="11.3" y="472.1" width="1.8" height="1.8" fill="#2848b0"/><rect x="11.3" y="475.7" width="1.8" height="1.8" fill="#2848b0"/><rect x="14.9" y="461.3" width="1.8" height="1.8" fill="#2848b0"/><rect x="14.9" y="464.9" width="1.8" height="1.8" fill="#2848b0"/><rect x="14.9" y="468.5" width="1.8" height="1.8" fill="#2848b0"/><rect x="14.9" y="472.1" width="1.8" height="1.8" fill="#2848b0"/><rect x="14.9" y="475.7" width="1.8" height="1.8" fill="#2848b0"/><rect x="18.5" y="461.3" width="1.8" height="1.8" fill="#2848b0"/><rect x="18.5" y="464.9" width="1.8" height="1.8" fill="#2848b0"/><rect x="18.5" y="468.5" width="1.8" height="1.8" fill="#2848b0"/><rect x="18.5" y="472.1" width="1.8" height="1.8" fill="#2848b0"/><rect x="18.5" y="475.7" width="1.8" height="1.8" fill="#2848b0"/><rect x="22.1" y="461.3" width="1.8" height="1.8" fill="#2848b0"/><rect x="22.1" y="464.9" width="1.8" height="1.8" fill="#2848b0"/><rect x="22.1" y="468.5" width="1.8" height="1.8" fill="#2848b0"/><rect x="22.1" y="472.1" width="1.8" height="1.8" fill="#2848b0"/><rect x="22.1" y="475.7" width="1.8" height="1.8" fill="#2848b0"/><rect x="25.7" y="461.3" width="1.8" height="1.8" fill="#2848b0"/><rect x="25.7" y="464.9" width="1.8" height="1.8" fill="#2848b0"/><rect x="25.7" y="468.5" width="1.8" height="1.8" fill="#2848b0"/><rect x="25.7" y="472.1" width="1.8" height="1.8" fill="#2848b0"/><rect x="25.7" y="475.7" width="1.8" height="1.8" fill="#2848b0"/>
<path d="M11 501.5 L29 516.5 M29 501.5 L11 516.5" stroke="#3c3c3c" stroke-width="5.2" stroke-linecap="butt"/>
<path d="M20.5 534.5 V556" stroke="#202020" stroke-width="1.2"/><path d="M18.5 538 V553.5 H10.5 Z" fill="#8c8c8c" stroke="#303030" stroke-width="0.9"/><path d="M23 538 V553.5 H31 Z" fill="#8c8c8c" stroke="#303030" stroke-width="0.9"/>
<path d="M9.5 575.5 H31.5" stroke="#202020" stroke-width="1.2"/><path d="M30.5 573.5 H14 L30.5 565.5 Z" fill="#8c8c8c" stroke="#303030" stroke-width="0.9"/><path d="M30.5 578 H14 L30.5 586 Z" fill="#8c8c8c" stroke="#303030" stroke-width="0.9"/>
<rect x="13.5" y="595.5" width="14" height="14" fill="url(#sqg)"/><path d="M10 596 V615.5 H30" fill="none" stroke="#303030" stroke-width="2.6"/><path d="M28.5 612.5 L32 615.5 L28.5 618.5 Z M7.5 598.5 L10 595 L12.5 598.5 Z" fill="#303030"/>
</svg>
<div class="a" style="left:37px;top:121px;width:888px;height:18px;background:#f7f7f7"></div>
<div class="a" style="left:37px;top:139px;width:20px;height:463px;background:#f7f7f7"></div>
<div class="a" style="left:36px;top:121px;width:1px;height:498px;background:#d4d4d4"></div>
<div class="a" style="left:37px;top:602px;width:19px;height:17px;background:#f7f7f7"></div>
<div class="a" style="left:56px;top:602px;width:1px;height:17px;background:#b8b8b8"></div>
<div class="a" style="left:38px;top:122px;width:18px;height:16px;background:#fafafa;border:1px solid #cfcfcf"></div>
<div class="a" style="left:56px;top:139px;width:852px;height:463px;background:#fff;border:1px solid #111;border-left-width:2px;border-top-width:2px"></div>
<svg class="a" style="left:0;top:0" width="1229" height="679" viewBox="0 0 1229 679" shape-rendering="crispEdges">
<rect x="924" y="134" width="1" height="4" fill="#222"/>
<rect x="914" y="134" width="1" height="4" fill="#222"/>
<rect x="903" y="134" width="1" height="4" fill="#222"/>
<rect x="893" y="134" width="1" height="4" fill="#222"/>
<rect x="883" y="122" width="1" height="16" fill="#222"/>
<rect x="872" y="134" width="1" height="4" fill="#222"/>
<rect x="862" y="134" width="1" height="4" fill="#222"/>
<rect x="852" y="134" width="1" height="4" fill="#222"/>
<rect x="841" y="134" width="1" height="4" fill="#222"/>
<rect x="831" y="131" width="1" height="7" fill="#222"/>
<rect x="821" y="134" width="1" height="4" fill="#222"/>
<rect x="810" y="134" width="1" height="4" fill="#222"/>
<rect x="800" y="134" width="1" height="4" fill="#222"/>
<rect x="790" y="134" width="1" height="4" fill="#222"/>
<rect x="779" y="122" width="1" height="16" fill="#222"/>
<rect x="769" y="134" width="1" height="4" fill="#222"/>
<rect x="759" y="134" width="1" height="4" fill="#222"/>
<rect x="748" y="134" width="1" height="4" fill="#222"/>
<rect x="738" y="134" width="1" height="4" fill="#222"/>
<rect x="728" y="131" width="1" height="7" fill="#222"/>
<rect x="717" y="134" width="1" height="4" fill="#222"/>
<rect x="707" y="134" width="1" height="4" fill="#222"/>
<rect x="697" y="134" width="1" height="4" fill="#222"/>
<rect x="686" y="134" width="1" height="4" fill="#222"/>
<rect x="676" y="122" width="1" height="16" fill="#222"/>
<rect x="665" y="134" width="1" height="4" fill="#222"/>
<rect x="655" y="134" width="1" height="4" fill="#222"/>
<rect x="645" y="134" width="1" height="4" fill="#222"/>
<rect x="634" y="134" width="1" height="4" fill="#222"/>
<rect x="624" y="131" width="1" height="7" fill="#222"/>
<rect x="614" y="134" width="1" height="4" fill="#222"/>
<rect x="603" y="134" width="1" height="4" fill="#222"/>
<rect x="593" y="134" width="1" height="4" fill="#222"/>
<rect x="583" y="134" width="1" height="4" fill="#222"/>
<rect x="572" y="122" width="1" height="16" fill="#222"/>
<rect x="562" y="134" width="1" height="4" fill="#222"/>
<rect x="552" y="134" width="1" height="4" fill="#222"/>
<rect x="541" y="134" width="1" height="4" fill="#222"/>
<rect x="531" y="134" width="1" height="4" fill="#222"/>
<rect x="521" y="131" width="1" height="7" fill="#222"/>
<rect x="510" y="134" width="1" height="4" fill="#222"/>
<rect x="500" y="134" width="1" height="4" fill="#222"/>
<rect x="490" y="134" width="1" height="4" fill="#222"/>
<rect x="479" y="134" width="1" height="4" fill="#222"/>
<rect x="469" y="122" width="1" height="16" fill="#222"/>
<rect x="459" y="134" width="1" height="4" fill="#222"/>
<rect x="448" y="134" width="1" height="4" fill="#222"/>
<rect x="438" y="134" width="1" height="4" fill="#222"/>
<rect x="428" y="134" width="1" height="4" fill="#222"/>
<rect x="417" y="131" width="1" height="7" fill="#222"/>
<rect x="407" y="134" width="1" height="4" fill="#222"/>
<rect x="397" y="134" width="1" height="4" fill="#222"/>
<rect x="386" y="134" width="1" height="4" fill="#222"/>
<rect x="376" y="134" width="1" height="4" fill="#222"/>
<rect x="366" y="122" width="1" height="16" fill="#222"/>
<rect x="355" y="134" width="1" height="4" fill="#222"/>
<rect x="345" y="134" width="1" height="4" fill="#222"/>
<rect x="335" y="134" width="1" height="4" fill="#222"/>
<rect x="324" y="134" width="1" height="4" fill="#222"/>
<rect x="314" y="131" width="1" height="7" fill="#222"/>
<rect x="303" y="134" width="1" height="4" fill="#222"/>
<rect x="293" y="134" width="1" height="4" fill="#222"/>
<rect x="283" y="134" width="1" height="4" fill="#222"/>
<rect x="272" y="134" width="1" height="4" fill="#222"/>
<rect x="262" y="122" width="1" height="16" fill="#222"/>
<rect x="252" y="134" width="1" height="4" fill="#222"/>
<rect x="241" y="134" width="1" height="4" fill="#222"/>
<rect x="231" y="134" width="1" height="4" fill="#222"/>
<rect x="221" y="134" width="1" height="4" fill="#222"/>
<rect x="210" y="131" width="1" height="7" fill="#222"/>
<rect x="200" y="134" width="1" height="4" fill="#222"/>
<rect x="190" y="134" width="1" height="4" fill="#222"/>
<rect x="179" y="134" width="1" height="4" fill="#222"/>
<rect x="169" y="134" width="1" height="4" fill="#222"/>
<rect x="159" y="122" width="1" height="16" fill="#222"/>
<rect x="148" y="134" width="1" height="4" fill="#222"/>
<rect x="138" y="134" width="1" height="4" fill="#222"/>
<rect x="128" y="134" width="1" height="4" fill="#222"/>
<rect x="117" y="134" width="1" height="4" fill="#222"/>
<rect x="107" y="131" width="1" height="7" fill="#222"/>
<rect x="97" y="134" width="1" height="4" fill="#222"/>
<rect x="86" y="134" width="1" height="4" fill="#222"/>
<rect x="76" y="134" width="1" height="4" fill="#222"/>
<rect x="66" y="134" width="1" height="4" fill="#222"/>
<rect x="51" y="146" width="4" height="1" fill="#222"/>
<rect x="51" y="156" width="4" height="1" fill="#222"/>
<rect x="38" y="167" width="18" height="1" fill="#222"/>
<rect x="51" y="177" width="4" height="1" fill="#222"/>
<rect x="51" y="187" width="4" height="1" fill="#222"/>
<rect x="51" y="198" width="4" height="1" fill="#222"/>
<rect x="51" y="208" width="4" height="1" fill="#222"/>
<rect x="48" y="218" width="7" height="1" fill="#222"/>
<rect x="51" y="229" width="4" height="1" fill="#222"/>
<rect x="51" y="239" width="4" height="1" fill="#222"/>
<rect x="51" y="249" width="4" height="1" fill="#222"/>
<rect x="51" y="260" width="4" height="1" fill="#222"/>
<rect x="38" y="270" width="18" height="1" fill="#222"/>
<rect x="51" y="280" width="4" height="1" fill="#222"/>
<rect x="51" y="291" width="4" height="1" fill="#222"/>
<rect x="51" y="301" width="4" height="1" fill="#222"/>
<rect x="51" y="311" width="4" height="1" fill="#222"/>
<rect x="48" y="322" width="7" height="1" fill="#222"/>
<rect x="51" y="332" width="4" height="1" fill="#222"/>
<rect x="51" y="342" width="4" height="1" fill="#222"/>
<rect x="51" y="353" width="4" height="1" fill="#222"/>
<rect x="51" y="363" width="4" height="1" fill="#222"/>
<rect x="38" y="373" width="18" height="1" fill="#222"/>
<rect x="51" y="384" width="4" height="1" fill="#222"/>
<rect x="51" y="394" width="4" height="1" fill="#222"/>
<rect x="51" y="404" width="4" height="1" fill="#222"/>
<rect x="51" y="415" width="4" height="1" fill="#222"/>
<rect x="48" y="425" width="7" height="1" fill="#222"/>
<rect x="51" y="436" width="4" height="1" fill="#222"/>
<rect x="51" y="446" width="4" height="1" fill="#222"/>
<rect x="51" y="456" width="4" height="1" fill="#222"/>
<rect x="51" y="467" width="4" height="1" fill="#222"/>
<rect x="38" y="477" width="18" height="1" fill="#222"/>
<rect x="51" y="487" width="4" height="1" fill="#222"/>
<rect x="51" y="498" width="4" height="1" fill="#222"/>
<rect x="51" y="508" width="4" height="1" fill="#222"/>
<rect x="51" y="518" width="4" height="1" fill="#222"/>
<rect x="48" y="529" width="7" height="1" fill="#222"/>
<rect x="51" y="539" width="4" height="1" fill="#222"/>
<rect x="51" y="549" width="4" height="1" fill="#222"/>
<rect x="51" y="560" width="4" height="1" fill="#222"/>
<rect x="51" y="570" width="4" height="1" fill="#222"/>
<rect x="38" y="580" width="18" height="1" fill="#222"/>
<rect x="51" y="591" width="4" height="1" fill="#222"/>
<rect x="51" y="601" width="4" height="1" fill="#222"/>
<rect x="51" y="611" width="4" height="1" fill="#222"/>
<rect x="879" y="122" width="2" height="16" fill="#1a1a2a"/>
<rect x="38" y="352" width="17" height="2" fill="#1a1a2a"/>
<path d="M831.5 141 V600" stroke="#949494" stroke-width="1" stroke-dasharray="3 3" stroke-dashoffset="1"/>
<path d="M779.5 141 V600" stroke="#949494" stroke-width="1" stroke-dasharray="3 3" stroke-dashoffset="1"/>
<path d="M728.5 141 V600" stroke="#949494" stroke-width="1" stroke-dasharray="3 3" stroke-dashoffset="1"/>
<path d="M676.5 141 V600" stroke="#949494" stroke-width="1" stroke-dasharray="3 3" stroke-dashoffset="1"/>
<path d="M624.5 141 V600" stroke="#949494" stroke-width="1" stroke-dasharray="3 3" stroke-dashoffset="1"/>
<path d="M572.5 141 V600" stroke="#949494" stroke-width="1" stroke-dasharray="3 3" stroke-dashoffset="1"/>
<path d="M521.5 141 V600" stroke="#949494" stroke-width="1" stroke-dasharray="3 3" stroke-dashoffset="1"/>
<path d="M469.5 141 V600" stroke="#949494" stroke-width="1" stroke-dasharray="3 3" stroke-dashoffset="1"/>
<path d="M417.5 141 V600" stroke="#949494" stroke-width="1" stroke-dasharray="3 3" stroke-dashoffset="1"/>
<path d="M366.5 141 V600" stroke="#949494" stroke-width="1" stroke-dasharray="3 3" stroke-dashoffset="1"/>
<path d="M314.5 141 V600" stroke="#949494" stroke-width="1" stroke-dasharray="3 3" stroke-dashoffset="1"/>
<path d="M262.5 141 V600" stroke="#949494" stroke-width="1" stroke-dasharray="3 3" stroke-dashoffset="1"/>
<path d="M210.5 141 V600" stroke="#949494" stroke-width="1" stroke-dasharray="3 3" stroke-dashoffset="1"/>
<path d="M159.5 141 V600" stroke="#949494" stroke-width="1" stroke-dasharray="3 3" stroke-dashoffset="1"/>
<path d="M107.5 141 V600" stroke="#949494" stroke-width="1" stroke-dasharray="3 3" stroke-dashoffset="1"/>
<path d="M58 167.5 H880" stroke="#949494" stroke-width="1" stroke-dasharray="3 3"/>
<path d="M58 218.5 H880" stroke="#949494" stroke-width="1" stroke-dasharray="3 3"/>
<path d="M58 270.5 H880" stroke="#949494" stroke-width="1" stroke-dasharray="3 3"/>
<path d="M58 322.5 H880" stroke="#949494" stroke-width="1" stroke-dasharray="3 3"/>
<path d="M58 373.5 H880" stroke="#949494" stroke-width="1" stroke-dasharray="3 3"/>
<path d="M58 425.5 H880" stroke="#949494" stroke-width="1" stroke-dasharray="3 3"/>
<path d="M58 477.5 H880" stroke="#949494" stroke-width="1" stroke-dasharray="3 3"/>
<path d="M58 529.5 H880" stroke="#949494" stroke-width="1" stroke-dasharray="3 3"/>
<path d="M58 580.5 H880" stroke="#949494" stroke-width="1" stroke-dasharray="3 3"/>
<rect x="881" y="141" width="2" height="460" fill="#000"/>
</svg>
<div class="lbl" style="right:345.8px;top:120.5px;font-family:'DejaVu Sans','Liberation Sans',sans-serif;font-weight:bold;font-size:12px;color:#222;letter-spacing:-0.35px">0.0</div>
<div class="lbl" style="right:449.2px;top:120.5px;font-family:'DejaVu Sans','Liberation Sans',sans-serif;font-weight:bold;font-size:12px;color:#222;letter-spacing:-0.35px">100.0</div>
<div class="lbl" style="right:552.7px;top:120.5px;font-family:'DejaVu Sans','Liberation Sans',sans-serif;font-weight:bold;font-size:12px;color:#222;letter-spacing:-0.35px">200.0</div>
<div class="lbl" style="right:656.1px;top:120.5px;font-family:'DejaVu Sans','Liberation Sans',sans-serif;font-weight:bold;font-size:12px;color:#222;letter-spacing:-0.35px">300.0</div>
<div class="lbl" style="right:759.5px;top:120.5px;font-family:'DejaVu Sans','Liberation Sans',sans-serif;font-weight:bold;font-size:12px;color:#222;letter-spacing:-0.35px">400.0</div>
<div class="lbl" style="right:862.9px;top:120.5px;font-family:'DejaVu Sans','Liberation Sans',sans-serif;font-weight:bold;font-size:12px;color:#222;letter-spacing:-0.35px">500.0</div>
<div class="lbl" style="right:966.4px;top:120.5px;font-family:'DejaVu Sans','Liberation Sans',sans-serif;font-weight:bold;font-size:12px;color:#222;letter-spacing:-0.35px">600.0</div>
<div class="lbl" style="right:1069.8px;top:120.5px;font-family:'DejaVu Sans','Liberation Sans',sans-serif;font-weight:bold;font-size:12px;color:#222;letter-spacing:-0.35px">700.0</div>
<div class="lbl" style="left:40px;top:167.1px;transform-origin:0 0;transform:rotate(-90deg);font-family:'DejaVu Sans','Liberation Sans',sans-serif;font-weight:bold;font-size:12px;color:#222;letter-spacing:-0.35px">400.0</div>
<div class="lbl" style="left:40px;top:270.5px;transform-origin:0 0;transform:rotate(-90deg);font-family:'DejaVu Sans','Liberation Sans',sans-serif;font-weight:bold;font-size:12px;color:#222;letter-spacing:-0.35px">500.0</div>
<div class="lbl" style="left:40px;top:374.0px;transform-origin:0 0;transform:rotate(-90deg);font-family:'DejaVu Sans','Liberation Sans',sans-serif;font-weight:bold;font-size:12px;color:#222;letter-spacing:-0.35px">600.0</div>
<div class="lbl" style="left:40px;top:477.4px;transform-origin:0 0;transform:rotate(-90deg);font-family:'DejaVu Sans','Liberation Sans',sans-serif;font-weight:bold;font-size:12px;color:#222;letter-spacing:-0.35px">700.0</div>
<div class="lbl" style="left:40px;top:580.8px;transform-origin:0 0;transform:rotate(-90deg);font-family:'DejaVu Sans','Liberation Sans',sans-serif;font-weight:bold;font-size:12px;color:#222;letter-spacing:-0.35px">800.0</div>
<div class="a" style="left:37px;top:121px;width:20px;height:17px;background:#f7f7f7"></div>
<div class="a" style="left:38px;top:122px;width:18px;height:16px;background:#fafafa;border:1px solid #cfcfcf"></div>
<div class="a" style="left:37px;top:139px;width:20px;height:2px;background:#111"></div>
<div class="a" style="left:908px;top:139px;width:18px;height:1px;background:#666;z-index:5"></div>
<div class="a" style="left:37px;top:138px;width:889px;height:1px;background:#b0b0b0"></div>
<div class="a" style="left:55px;top:141px;width:1px;height:460px;background:#8a8a8a"></div>
<div class="a" style="left:56px;top:121px;width:2px;height:18px;background:#333"></div>
<div class="a" style="left:37px;top:120px;width:21px;height:1px;background:#555"></div>
<div class="a" style="left:58px;top:120px;width:868px;height:1px;background:#7a7a7a"></div>
<svg class="a" style="left:0;top:0" width="1229" height="679" viewBox="0 0 1229 679" shape-rendering="crispEdges">
<path d="M291.50 275.40 V404.50 M298.75 275.40 V404.50 M305.99 275.40 V404.50 M313.24 275.40 V404.50 M320.48 275.40 V404.50 M327.73 275.40 V404.50 M334.97 275.40 V404.50 M342.21 275.40 V404.50 M349.46 275.40 V404.50 M356.70 275.40 V404.50 M363.95 275.40 V404.50 M371.19 275.40 V404.50 M378.44 275.40 V404.50 M385.69 275.40 V404.50 M392.93 275.40 V404.50 M400.17 275.40 V404.50 M407.42 275.40 V404.50 M414.66 275.40 V404.50 M421.91 275.40 V404.50 M429.15 275.40 V404.50 M436.40 275.40 V404.50 M291.50 275.40 L292.70 275.40 L292.70 278.40 Q295.12 280.90 296.94 277.60 L296.94 275.40 L298.75 275.40 M291.50 404.50 L292.70 404.50 L292.70 401.50 Q295.12 399.00 296.94 402.30 L296.94 404.50 L298.75 404.50 M293.10 313.40 Q298.14 314.40 297.55 318.40 Q298.14 322.40 293.10 323.40 M293.10 313.40 Q294.90 318.40 293.10 323.40 M291.50 318.40 H293.90 M293.10 356.50 Q298.14 357.50 297.55 361.50 Q298.14 365.50 293.10 366.50 M293.10 356.50 Q294.90 361.50 293.10 366.50 M291.50 361.50 H293.90 M298.75 275.40 L299.94 275.40 L299.94 278.40 Q302.37 280.90 304.19 277.60 L304.19 275.40 L305.99 275.40 M298.75 404.50 L299.94 404.50 L299.94 401.50 Q302.37 399.00 304.19 402.30 L304.19 404.50 L305.99 404.50 M300.35 313.40 Q305.39 314.40 304.79 318.40 Q305.39 322.40 300.35 323.40 M300.35 313.40 Q302.14 318.40 300.35 323.40 M298.75 318.40 H301.14 M300.35 356.50 Q305.39 357.50 304.79 361.50 Q305.39 365.50 300.35 366.50 M300.35 356.50 Q302.14 361.50 300.35 366.50 M298.75 361.50 H301.14 M305.99 275.40 L307.19 275.40 L307.19 278.40 Q309.61 280.90 311.44 277.60 L311.44 275.40 L313.24 275.40 M305.99 404.50 L307.19 404.50 L307.19 401.50 Q309.61 399.00 311.44 402.30 L311.44 404.50 L313.24 404.50 M307.59 313.40 Q312.63 314.40 312.04 318.40 Q312.63 322.40 307.59 323.40 M307.59 313.40 Q309.39 318.40 307.59 323.40 M305.99 318.40 H308.39 M307.59 356.50 Q312.63 357.50 312.04 361.50 Q312.63 365.50 307.59 366.50 M307.59 356.50 Q309.39 361.50 307.59 366.50 M305.99 361.50 H308.39 M313.24 275.40 L314.44 275.40 L314.44 278.40 Q316.86 280.90 318.68 277.60 L318.68 275.40 L320.48 275.40 M313.24 404.50 L314.44 404.50 L314.44 401.50 Q316.86 399.00 318.68 402.30 L318.68 404.50 L320.48 404.50 M314.84 313.40 Q319.88 314.40 319.28 318.40 Q319.88 322.40 314.84 323.40 M314.84 313.40 Q316.63 318.40 314.84 323.40 M313.24 318.40 H315.63 M314.84 356.50 Q319.88 357.50 319.28 361.50 Q319.88 365.50 314.84 366.50 M314.84 356.50 Q316.63 361.50 314.84 366.50 M313.24 361.50 H315.63 M320.48 275.40 L321.68 275.40 L321.68 278.40 Q324.10 280.90 325.93 277.60 L325.93 275.40 L327.73 275.40 M320.48 404.50 L321.68 404.50 L321.68 401.50 Q324.10 399.00 325.93 402.30 L325.93 404.50 L327.73 404.50 M322.08 313.40 Q327.12 314.40 326.53 318.40 Q327.12 322.40 322.08 323.40 M322.08 313.40 Q323.88 318.40 322.08 323.40 M320.48 318.40 H322.88 M322.08 356.50 Q327.12 357.50 326.53 361.50 Q327.12 365.50 322.08 366.50 M322.08 356.50 Q323.88 361.50 322.08 366.50 M320.48 361.50 H322.88 M327.73 275.40 L328.93 275.40 L328.93 278.40 Q331.35 280.90 333.17 277.60 L333.17 275.40 L334.97 275.40 M327.73 404.50 L328.93 404.50 L328.93 401.50 Q331.35 399.00 333.17 402.30 L333.17 404.50 L334.97 404.50 M329.33 313.40 Q334.37 314.40 333.77 318.40 Q334.37 322.40 329.33 323.40 M329.33 313.40 Q331.12 318.40 329.33 323.40 M327.73 318.40 H330.12 M329.33 356.50 Q334.37 357.50 333.77 361.50 Q334.37 365.50 329.33 366.50 M329.33 356.50 Q331.12 361.50 329.33 366.50 M327.73 361.50 H330.12 M334.97 275.40 L336.17 275.40 L336.17 278.40 Q338.59 280.90 340.42 277.60 L340.42 275.40 L342.22 275.40 M334.97 404.50 L336.17 404.50 L336.17 401.50 Q338.59 399.00 340.42 402.30 L340.42 404.50 L342.22 404.50 M336.57 313.40 Q341.62 314.40 341.02 318.40 Q341.62 322.40 336.57 323.40 M336.57 313.40 Q338.37 318.40 336.57 323.40 M334.97 318.40 H337.37 M336.57 356.50 Q341.62 357.50 341.02 361.50 Q341.62 365.50 336.57 366.50 M336.57 356.50 Q338.37 361.50 336.57 366.50 M334.97 361.50 H337.37 M342.21 275.40 L343.41 275.40 L343.41 278.40 Q345.84 280.90 347.66 277.60 L347.66 275.40 L349.46 275.40 M342.21 404.50 L343.41 404.50 L343.41 401.50 Q345.84 399.00 347.66 402.30 L347.66 404.50 L349.46 404.50 M343.81 313.40 Q348.86 314.40 348.26 318.40 Q348.86 322.40 343.81 323.40 M343.81 313.40 Q345.61 318.40 343.81 323.40 M342.21 318.40 H344.61 M343.81 356.50 Q348.86 357.50 348.26 361.50 Q348.86 365.50 343.81 366.50 M343.81 356.50 Q345.61 361.50 343.81 366.50 M342.21 361.50 H344.61 M349.46 275.40 L350.66 275.40 L350.66 278.40 Q353.08 280.90 354.90 277.60 L354.90 275.40 L356.70 275.40 M349.46 404.50 L350.66 404.50 L350.66 401.50 Q353.08 399.00 354.90 402.30 L354.90 404.50 L356.70 404.50 M351.06 313.40 Q356.10 314.40 355.50 318.40 Q356.10 322.40 351.06 323.40 M351.06 313.40 Q352.86 318.40 351.06 323.40 M349.46 318.40 H351.86 M351.06 356.50 Q356.10 357.50 355.50 361.50 Q356.10 365.50 351.06 366.50 M351.06 356.50 Q352.86 361.50 351.06 366.50 M349.46 361.50 H351.86 M356.70 275.40 L357.90 275.40 L357.90 278.40 Q360.33 280.90 362.15 277.60 L362.15 275.40 L363.95 275.40 M356.70 404.50 L357.90 404.50 L357.90 401.50 Q360.33 399.00 362.15 402.30 L362.15 404.50 L363.95 404.50 M358.31 313.40 Q363.35 314.40 362.75 318.40 Q363.35 322.40 358.31 323.40 M358.31 313.40 Q360.10 318.40 358.31 323.40 M356.70 318.40 H359.10 M358.31 356.50 Q363.35 357.50 362.75 361.50 Q363.35 365.50 358.31 366.50 M358.31 356.50 Q360.10 361.50 358.31 366.50 M356.70 361.50 H359.10 M363.95 275.40 L365.15 275.40 L365.15 278.40 Q367.57 280.90 369.39 277.60 L369.39 275.40 L371.19 275.40 M363.95 404.50 L365.15 404.50 L365.15 401.50 Q367.57 399.00 369.39 402.30 L369.39 404.50 L371.19 404.50 M365.55 313.40 Q370.59 314.40 370.00 318.40 Q370.59 322.40 365.55 323.40 M365.55 313.40 Q367.35 318.40 365.55 323.40 M363.95 318.40 H366.35 M365.55 356.50 Q370.59 357.50 370.00 361.50 Q370.59 365.50 365.55 366.50 M365.55 356.50 Q367.35 361.50 365.55 366.50 M363.95 361.50 H366.35 M371.19 275.40 L372.39 275.40 L372.39 278.40 Q374.82 280.90 376.64 277.60 L376.64 275.40 L378.44 275.40 M371.19 404.50 L372.39 404.50 L372.39 401.50 Q374.82 399.00 376.64 402.30 L376.64 404.50 L378.44 404.50 M372.80 313.40 Q377.84 314.40 377.24 318.40 Q377.84 322.40 372.80 323.40 M372.80 313.40 Q374.59 318.40 372.80 323.40 M371.19 318.40 H373.59 M372.80 356.50 Q377.84 357.50 377.24 361.50 Q377.84 365.50 372.80 366.50 M372.80 356.50 Q374.59 361.50 372.80 366.50 M371.19 361.50 H373.59 M378.44 275.40 L379.64 275.40 L379.64 278.40 Q382.06 280.90 383.88 277.60 L383.88 275.40 L385.69 275.40 M378.44 404.50 L379.64 404.50 L379.64 401.50 Q382.06 399.00 383.88 402.30 L383.88 404.50 L385.69 404.50 M380.04 313.40 Q385.08 314.40 384.49 318.40 Q385.08 322.40 380.04 323.40 M380.04 313.40 Q381.84 318.40 380.04 323.40 M378.44 318.40 H380.84 M380.04 356.50 Q385.08 357.50 384.49 361.50 Q385.08 365.50 380.04 366.50 M380.04 356.50 Q381.84 361.50 380.04 366.50 M378.44 361.50 H380.84 M385.69 275.40 L386.88 275.40 L386.88 278.40 Q389.31 280.90 391.13 277.60 L391.13 275.40 L392.93 275.40 M385.69 404.50 L386.88 404.50 L386.88 401.50 Q389.31 399.00 391.13 402.30 L391.13 404.50 L392.93 404.50 M387.29 313.40 Q392.33 314.40 391.73 318.40 Q392.33 322.40 387.29 323.40 M387.29 313.40 Q389.08 318.40 387.29 323.40 M385.69 318.40 H388.08 M387.29 356.50 Q392.33 357.50 391.73 361.50 Q392.33 365.50 387.29 366.50 M387.29 356.50 Q389.08 361.50 387.29 366.50 M385.69 361.50 H388.08 M392.93 275.40 L394.13 275.40 L394.13 278.40 Q396.55 280.90 398.38 277.60 L398.38 275.40 L400.18 275.40 M392.93 404.50 L394.13 404.50 L394.13 401.50 Q396.55 399.00 398.38 402.30 L398.38 404.50 L400.18 404.50 M394.53 313.40 Q399.57 314.40 398.98 318.40 Q399.57 322.40 394.53 323.40 M394.53 313.40 Q396.33 318.40 394.53 323.40 M392.93 318.40 H395.33 M394.53 356.50 Q399.57 357.50 398.98 361.50 Q399.57 365.50 394.53 366.50 M394.53 356.50 Q396.33 361.50 394.53 366.50 M392.93 361.50 H395.33 M400.17 275.40 L401.37 275.40 L401.37 278.40 Q403.80 280.90 405.62 277.60 L405.62 275.40 L407.42 275.40 M400.17 404.50 L401.37 404.50 L401.37 401.50 Q403.80 399.00 405.62 402.30 L405.62 404.50 L407.42 404.50 M401.77 313.40 Q406.82 314.40 406.22 318.40 Q406.82 322.40 401.77 323.40 M401.77 313.40 Q403.57 318.40 401.77 323.40 M400.17 318.40 H402.57 M401.77 356.50 Q406.82 357.50 406.22 361.50 Q406.82 365.50 401.77 366.50 M401.77 356.50 Q403.57 361.50 401.77 366.50 M400.17 361.50 H402.57 M407.42 275.40 L408.62 275.40 L408.62 278.40 Q411.04 280.90 412.86 277.60 L412.86 275.40 L414.66 275.40 M407.42 404.50 L408.62 404.50 L408.62 401.50 Q411.04 399.00 412.86 402.30 L412.86 404.50 L414.66 404.50 M409.02 313.40 Q414.06 314.40 413.46 318.40 Q414.06 322.40 409.02 323.40 M409.02 313.40 Q410.82 318.40 409.02 323.40 M407.42 318.40 H409.82 M409.02 356.50 Q414.06 357.50 413.46 361.50 Q414.06 365.50 409.02 366.50 M409.02 356.50 Q410.82 361.50 409.02 366.50 M407.42 361.50 H409.82 M414.66 275.40 L415.86 275.40 L415.86 278.40 Q418.29 280.90 420.11 277.60 L420.11 275.40 L421.91 275.40 M414.66 404.50 L415.86 404.50 L415.86 401.50 Q418.29 399.00 420.11 402.30 L420.11 404.50 L421.91 404.50 M416.26 313.40 Q421.31 314.40 420.71 318.40 Q421.31 322.40 416.26 323.40 M416.26 313.40 Q418.06 318.40 416.26 323.40 M414.66 318.40 H417.06 M416.26 356.50 Q421.31 357.50 420.71 361.50 Q421.31 365.50 416.26 366.50 M416.26 356.50 Q418.06 361.50 416.26 366.50 M414.66 361.50 H417.06 M421.91 275.40 L423.11 275.40 L423.11 278.40 Q425.53 280.90 427.35 277.60 L427.35 275.40 L429.15 275.40 M421.91 404.50 L423.11 404.50 L423.11 401.50 Q425.53 399.00 427.35 402.30 L427.35 404.50 L429.15 404.50 M423.51 313.40 Q428.55 314.40 427.95 318.40 Q428.55 322.40 423.51 323.40 M423.51 313.40 Q425.31 318.40 423.51 323.40 M421.91 318.40 H424.31 M423.51 356.50 Q428.55 357.50 427.95 361.50 Q428.55 365.50 423.51 366.50 M423.51 356.50 Q425.31 361.50 423.51 366.50 M421.91 361.50 H424.31 M429.15 275.40 L430.35 275.40 L430.35 278.40 Q432.78 280.90 434.60 277.60 L434.60 275.40 L436.40 275.40 M429.15 404.50 L430.35 404.50 L430.35 401.50 Q432.78 399.00 434.60 402.30 L434.60 404.50 L436.40 404.50 M430.75 313.40 Q435.80 314.40 435.20 318.40 Q435.80 322.40 430.75 323.40 M430.75 313.40 Q432.55 318.40 430.75 323.40 M429.15 318.40 H431.55 M430.75 356.50 Q435.80 357.50 435.20 361.50 Q435.80 365.50 430.75 366.50 M430.75 356.50 Q432.55 361.50 430.75 366.50 M429.15 361.50 H431.55" fill="none" stroke="#000" stroke-width="1"/>
<path d="M442.40 272.80 V386.20 M449.65 272.80 V386.20 M456.90 272.80 V386.20 M464.15 272.80 V386.20 M471.40 272.80 V386.20 M478.65 272.80 V386.20 M485.90 272.80 V386.20 M493.15 272.80 V386.20 M500.40 272.80 V386.20 M507.65 272.80 V386.20 M514.90 272.80 V386.20 M522.15 272.80 V386.20 M529.40 272.80 V386.20 M536.65 272.80 V386.20 M543.90 272.80 V386.20 M551.15 272.80 V386.20 M558.40 272.80 V386.20 M565.65 272.80 V386.20 M572.90 272.80 V386.20 M580.15 272.80 V386.20 M587.40 272.80 V386.20 M442.40 272.80 H443.70 V276.00 H446.80 V274.30 H445.60 V272.80 H449.65 M442.40 386.20 L443.60 386.20 L443.60 383.20 Q446.02 380.70 447.85 384.00 L447.85 386.20 L449.65 386.20 M445.60 306.00 H447.05 L448.05 308.00 V313.20 L447.05 315.20 H445.60 L444.60 313.20 V308.00 Z M442.40 310.60 H444.60 M445.60 343.20 H447.05 L448.05 345.20 V350.40 L447.05 352.40 H445.60 L444.60 350.40 V345.20 Z M442.40 347.80 H444.60 M449.65 272.80 H450.95 V276.00 H454.05 V274.30 H452.85 V272.80 H456.90 M449.65 386.20 L450.85 386.20 L450.85 383.20 Q453.27 380.70 455.10 384.00 L455.10 386.20 L456.90 386.20 M452.85 306.00 H454.30 L455.30 308.00 V313.20 L454.30 315.20 H452.85 L451.85 313.20 V308.00 Z M449.65 310.60 H451.85 M452.85 343.20 H454.30 L455.30 345.20 V350.40 L454.30 352.40 H452.85 L451.85 350.40 V345.20 Z M449.65 347.80 H451.85 M456.90 272.80 H458.20 V276.00 H461.30 V274.30 H460.10 V272.80 H464.15 M456.90 386.20 L458.10 386.20 L458.10 383.20 Q460.52 380.70 462.35 384.00 L462.35 386.20 L464.15 386.20 M460.10 306.00 H461.55 L462.55 308.00 V313.20 L461.55 315.20 H460.10 L459.10 313.20 V308.00 Z M456.90 310.60 H459.10 M460.10 343.20 H461.55 L462.55 345.20 V350.40 L461.55 352.40 H460.10 L459.10 350.40 V345.20 Z M456.90 347.80 H459.10 M464.15 272.80 H465.45 V276.00 H468.55 V274.30 H467.35 V272.80 H471.40 M464.15 386.20 L465.35 386.20 L465.35 383.20 Q467.77 380.70 469.60 384.00 L469.60 386.20 L471.40 386.20 M467.35 306.00 H468.80 L469.80 308.00 V313.20 L468.80 315.20 H467.35 L466.35 313.20 V308.00 Z M464.15 310.60 H466.35 M467.35 343.20 H468.80 L469.80 345.20 V350.40 L468.80 352.40 H467.35 L466.35 350.40 V345.20 Z M464.15 347.80 H466.35 M471.40 272.80 H472.70 V276.00 H475.80 V274.30 H474.60 V272.80 H478.65 M471.40 386.20 L472.60 386.20 L472.60 383.20 Q475.02 380.70 476.85 384.00 L476.85 386.20 L478.65 386.20 M474.60 306.00 H476.05 L477.05 308.00 V313.20 L476.05 315.20 H474.60 L473.60 313.20 V308.00 Z M471.40 310.60 H473.60 M474.60 343.20 H476.05 L477.05 345.20 V350.40 L476.05 352.40 H474.60 L473.60 350.40 V345.20 Z M471.40 347.80 H473.60 M478.65 272.80 H479.95 V276.00 H483.05 V274.30 H481.85 V272.80 H485.90 M478.65 386.20 L479.85 386.20 L479.85 383.20 Q482.27 380.70 484.10 384.00 L484.10 386.20 L485.90 386.20 M481.85 306.00 H483.30 L484.30 308.00 V313.20 L483.30 315.20 H481.85 L480.85 313.20 V308.00 Z M478.65 310.60 H480.85 M481.85 343.20 H483.30 L484.30 345.20 V350.40 L483.30 352.40 H481.85 L480.85 350.40 V345.20 Z M478.65 347.80 H480.85 M485.90 272.80 H487.20 V276.00 H490.30 V274.30 H489.10 V272.80 H493.15 M485.90 386.20 L487.10 386.20 L487.10 383.20 Q489.52 380.70 491.35 384.00 L491.35 386.20 L493.15 386.20 M489.10 306.00 H490.55 L491.55 308.00 V313.20 L490.55 315.20 H489.10 L488.10 313.20 V308.00 Z M485.90 310.60 H488.10 M489.10 343.20 H490.55 L491.55 345.20 V350.40 L490.55 352.40 H489.10 L488.10 350.40 V345.20 Z M485.90 347.80 H488.10 M493.15 272.80 H494.45 V276.00 H497.55 V274.30 H496.35 V272.80 H500.40 M493.15 386.20 L494.35 386.20 L494.35 383.20 Q496.77 380.70 498.60 384.00 L498.60 386.20 L500.40 386.20 M496.35 306.00 H497.80 L498.80 308.00 V313.20 L497.80 315.20 H496.35 L495.35 313.20 V308.00 Z M493.15 310.60 H495.35 M496.35 343.20 H497.80 L498.80 345.20 V350.40 L497.80 352.40 H496.35 L495.35 350.40 V345.20 Z M493.15 347.80 H495.35 M500.40 272.80 H501.70 V276.00 H504.80 V274.30 H503.60 V272.80 H507.65 M500.40 386.20 L501.60 386.20 L501.60 383.20 Q504.02 380.70 505.85 384.00 L505.85 386.20 L507.65 386.20 M503.60 306.00 H505.05 L506.05 308.00 V313.20 L505.05 315.20 H503.60 L502.60 313.20 V308.00 Z M500.40 310.60 H502.60 M503.60 343.20 H505.05 L506.05 345.20 V350.40 L505.05 352.40 H503.60 L502.60 350.40 V345.20 Z M500.40 347.80 H502.60 M507.65 272.80 H508.95 V276.00 H512.05 V274.30 H510.85 V272.80 H514.90 M507.65 386.20 L508.85 386.20 L508.85 383.20 Q511.27 380.70 513.10 384.00 L513.10 386.20 L514.90 386.20 M510.85 306.00 H512.30 L513.30 308.00 V313.20 L512.30 315.20 H510.85 L509.85 313.20 V308.00 Z M507.65 310.60 H509.85 M510.85 343.20 H512.30 L513.30 345.20 V350.40 L512.30 352.40 H510.85 L509.85 350.40 V345.20 Z M507.65 347.80 H509.85 M514.90 272.80 H516.20 V276.00 H519.30 V274.30 H518.10 V272.80 H522.15 M514.90 386.20 L516.10 386.20 L516.10 383.20 Q518.52 380.70 520.35 384.00 L520.35 386.20 L522.15 386.20 M518.10 306.00 H519.55 L520.55 308.00 V313.20 L519.55 315.20 H518.10 L517.10 313.20 V308.00 Z M514.90 310.60 H517.10 M518.10 343.20 H519.55 L520.55 345.20 V350.40 L519.55 352.40 H518.10 L517.10 350.40 V345.20 Z M514.90 347.80 H517.10 M522.15 272.80 H523.45 V276.00 H526.55 V274.30 H525.35 V272.80 H529.40 M522.15 386.20 L523.35 386.20 L523.35 383.20 Q525.77 380.70 527.60 384.00 L527.60 386.20 L529.40 386.20 M525.35 306.00 H526.80 L527.80 308.00 V313.20 L526.80 315.20 H525.35 L524.35 313.20 V308.00 Z M522.15 310.60 H524.35 M525.35 343.20 H526.80 L527.80 345.20 V350.40 L526.80 352.40 H525.35 L524.35 350.40 V345.20 Z M522.15 347.80 H524.35 M529.40 272.80 H530.70 V276.00 H533.80 V274.30 H532.60 V272.80 H536.65 M529.40 386.20 L530.60 386.20 L530.60 383.20 Q533.02 380.70 534.85 384.00 L534.85 386.20 L536.65 386.20 M532.60 306.00 H534.05 L535.05 308.00 V313.20 L534.05 315.20 H532.60 L531.60 313.20 V308.00 Z M529.40 310.60 H531.60 M532.60 343.20 H534.05 L535.05 345.20 V350.40 L534.05 352.40 H532.60 L531.60 350.40 V345.20 Z M529.40 347.80 H531.60 M536.65 272.80 H537.95 V276.00 H541.05 V274.30 H539.85 V272.80 H543.90 M536.65 386.20 L537.85 386.20 L537.85 383.20 Q540.27 380.70 542.10 384.00 L542.10 386.20 L543.90 386.20 M539.85 306.00 H541.30 L542.30 308.00 V313.20 L541.30 315.20 H539.85 L538.85 313.20 V308.00 Z M536.65 310.60 H538.85 M539.85 343.20 H541.30 L542.30 345.20 V350.40 L541.30 352.40 H539.85 L538.85 350.40 V345.20 Z M536.65 347.80 H538.85 M543.90 272.80 H545.20 V276.00 H548.30 V274.30 H547.10 V272.80 H551.15 M543.90 386.20 L545.10 386.20 L545.10 383.20 Q547.52 380.70 549.35 384.00 L549.35 386.20 L551.15 386.20 M547.10 306.00 H548.55 L549.55 308.00 V313.20 L548.55 315.20 H547.10 L546.10 313.20 V308.00 Z M543.90 310.60 H546.10 M547.10 343.20 H548.55 L549.55 345.20 V350.40 L548.55 352.40 H547.10 L546.10 350.40 V345.20 Z M543.90 347.80 H546.10 M551.15 272.80 H552.45 V276.00 H555.55 V274.30 H554.35 V272.80 H558.40 M551.15 386.20 L552.35 386.20 L552.35 383.20 Q554.77 380.70 556.60 384.00 L556.60 386.20 L558.40 386.20 M554.35 306.00 H555.80 L556.80 308.00 V313.20 L555.80 315.20 H554.35 L553.35 313.20 V308.00 Z M551.15 310.60 H553.35 M554.35 343.20 H555.80 L556.80 345.20 V350.40 L555.80 352.40 H554.35 L553.35 350.40 V345.20 Z M551.15 347.80 H553.35 M558.40 272.80 H559.70 V276.00 H562.80 V274.30 H561.60 V272.80 H565.65 M558.40 386.20 L559.60 386.20 L559.60 383.20 Q562.02 380.70 563.85 384.00 L563.85 386.20 L565.65 386.20 M561.60 306.00 H563.05 L564.05 308.00 V313.20 L563.05 315.20 H561.60 L560.60 313.20 V308.00 Z M558.40 310.60 H560.60 M561.60 343.20 H563.05 L564.05 345.20 V350.40 L563.05 352.40 H561.60 L560.60 350.40 V345.20 Z M558.40 347.80 H560.60 M565.65 272.80 H566.95 V276.00 H570.05 V274.30 H568.85 V272.80 H572.90 M565.65 386.20 L566.85 386.20 L566.85 383.20 Q569.27 380.70 571.10 384.00 L571.10 386.20 L572.90 386.20 M568.85 306.00 H570.30 L571.30 308.00 V313.20 L570.30 315.20 H568.85 L567.85 313.20 V308.00 Z M565.65 310.60 H567.85 M568.85 343.20 H570.30 L571.30 345.20 V350.40 L570.30 352.40 H568.85 L567.85 350.40 V345.20 Z M565.65 347.80 H567.85 M572.90 272.80 H574.20 V276.00 H577.30 V274.30 H576.10 V272.80 H580.15 M572.90 386.20 L574.10 386.20 L574.10 383.20 Q576.52 380.70 578.35 384.00 L578.35 386.20 L580.15 386.20 M576.10 306.00 H577.55 L578.55 308.00 V313.20 L577.55 315.20 H576.10 L575.10 313.20 V308.00 Z M572.90 310.60 H575.10 M576.10 343.20 H577.55 L578.55 345.20 V350.40 L577.55 352.40 H576.10 L575.10 350.40 V345.20 Z M572.90 347.80 H575.10 M580.15 272.80 H581.45 V276.00 H584.55 V274.30 H583.35 V272.80 H587.40 M580.15 386.20 L581.35 386.20 L581.35 383.20 Q583.77 380.70 585.60 384.00 L585.60 386.20 L587.40 386.20 M583.35 306.00 H584.80 L585.80 308.00 V313.20 L584.80 315.20 H583.35 L582.35 313.20 V308.00 Z M580.15 310.60 H582.35 M583.35 343.20 H584.80 L585.80 345.20 V350.40 L584.80 352.40 H583.35 L582.35 350.40 V345.20 Z M580.15 347.80 H582.35" fill="none" stroke="#000" stroke-width="1"/>
<path d="M298.80 460.80 L302.36 454.53 L306.36 456.80 L308.04 453.84 L304.04 451.57 L307.60 445.30 L315.90 445.30 L315.90 449.90 L319.30 449.90 L319.30 445.30 L327.60 445.30 L331.16 451.57 L327.16 453.84 L328.84 456.80 L332.84 454.53 L336.40 460.80 L332.84 467.07 L328.84 464.80 L327.16 467.76 L331.16 470.03 L327.60 476.30 L319.30 476.30 L319.30 471.70 L315.90 471.70 L315.90 476.30 L307.60 476.30 L304.04 470.03 L308.04 467.76 L306.36 464.80 L302.36 467.07 L298.80 460.80 Z M298.80 491.80 L302.36 485.53 L306.36 487.80 L308.04 484.84 L304.04 482.57 L307.60 476.30 L315.90 476.30 L315.90 480.90 L319.30 480.90 L319.30 476.30 L327.60 476.30 L331.16 482.57 L327.16 484.84 L328.84 487.80 L332.84 485.53 L336.40 491.80 L332.84 498.07 L328.84 495.80 L327.16 498.76 L331.16 501.03 L327.60 507.30 L319.30 507.30 L319.30 502.70 L315.90 502.70 L315.90 507.30 L307.60 507.30 L304.04 501.03 L308.04 498.76 L306.36 495.80 L302.36 498.07 L298.80 491.80 Z M298.80 522.70 L302.36 516.43 L306.36 518.70 L308.04 515.74 L304.04 513.47 L307.60 507.20 L315.90 507.20 L315.90 511.80 L319.30 511.80 L319.30 507.20 L327.60 507.20 L331.16 513.47 L327.16 515.74 L328.84 518.70 L332.84 516.43 L336.40 522.70 L332.84 528.97 L328.84 526.70 L327.16 529.66 L331.16 531.93 L327.60 538.20 L319.30 538.20 L319.30 533.60 L315.90 533.60 L315.90 538.20 L307.60 538.20 L304.04 531.93 L308.04 529.66 L306.36 526.70 L302.36 528.97 L298.80 522.70 Z M327.60 444.90 L331.16 438.63 L335.16 440.90 L336.84 437.94 L332.84 435.67 L336.40 429.40 L344.70 429.40 L344.70 434.00 L348.10 434.00 L348.10 429.40 L356.40 429.40 L359.96 435.67 L355.96 437.94 L357.64 440.90 L361.64 438.63 L365.20 444.90 L361.64 451.17 L357.64 448.90 L355.96 451.86 L359.96 454.13 L356.40 460.40 L348.10 460.40 L348.10 455.80 L344.70 455.80 L344.70 460.40 L336.40 460.40 L332.84 454.13 L336.84 451.86 L335.16 448.90 L331.16 451.17 L327.60 444.90 Z M327.60 475.90 L331.16 469.63 L335.16 471.90 L336.84 468.94 L332.84 466.67 L336.40 460.40 L344.70 460.40 L344.70 465.00 L348.10 465.00 L348.10 460.40 L356.40 460.40 L359.96 466.67 L355.96 468.94 L357.64 471.90 L361.64 469.63 L365.20 475.90 L361.64 482.17 L357.64 479.90 L355.96 482.86 L359.96 485.13 L356.40 491.40 L348.10 491.40 L348.10 486.80 L344.70 486.80 L344.70 491.40 L336.40 491.40 L332.84 485.13 L336.84 482.86 L335.16 479.90 L331.16 482.17 L327.60 475.90 Z M327.60 506.80 L331.16 500.53 L335.16 502.80 L336.84 499.84 L332.84 497.57 L336.40 491.30 L344.70 491.30 L344.70 495.90 L348.10 495.90 L348.10 491.30 L356.40 491.30 L359.96 497.57 L355.96 499.84 L357.64 502.80 L361.64 500.53 L365.20 506.80 L361.64 513.07 L357.64 510.80 L355.96 513.76 L359.96 516.03 L356.40 522.30 L348.10 522.30 L348.10 517.70 L344.70 517.70 L344.70 522.30 L336.40 522.30 L332.84 516.03 L336.84 513.76 L335.16 510.80 L331.16 513.07 L327.60 506.80 Z M327.60 537.70 L331.16 531.43 L335.16 533.70 L336.84 530.74 L332.84 528.47 L336.40 522.20 L344.70 522.20 L344.70 526.80 L348.10 526.80 L348.10 522.20 L356.40 522.20 L359.96 528.47 L355.96 530.74 L357.64 533.70 L361.64 531.43 L365.20 537.70 L361.64 543.97 L357.64 541.70 L355.96 544.66 L359.96 546.93 L356.40 553.20 L348.10 553.20 L348.10 548.60 L344.70 548.60 L344.70 553.20 L336.40 553.20 L332.84 546.93 L336.84 544.66 L335.16 541.70 L331.16 543.97 L327.60 537.70 Z M356.00 460.40 L359.56 454.13 L363.56 456.40 L365.24 453.44 L361.24 451.17 L364.80 444.90 L373.10 444.90 L373.10 449.50 L376.50 449.50 L376.50 444.90 L384.80 444.90 L388.36 451.17 L384.36 453.44 L386.04 456.40 L390.04 454.13 L393.60 460.40 L390.04 466.67 L386.04 464.40 L384.36 467.36 L388.36 469.63 L384.80 475.90 L376.50 475.90 L376.50 471.30 L373.10 471.30 L373.10 475.90 L364.80 475.90 L361.24 469.63 L365.24 467.36 L363.56 464.40 L359.56 466.67 L356.00 460.40 Z M356.00 491.30 L359.56 485.03 L363.56 487.30 L365.24 484.34 L361.24 482.07 L364.80 475.80 L373.10 475.80 L373.10 480.40 L376.50 480.40 L376.50 475.80 L384.80 475.80 L388.36 482.07 L384.36 484.34 L386.04 487.30 L390.04 485.03 L393.60 491.30 L390.04 497.57 L386.04 495.30 L384.36 498.26 L388.36 500.53 L384.80 506.80 L376.50 506.80 L376.50 502.20 L373.10 502.20 L373.10 506.80 L364.80 506.80 L361.24 500.53 L365.24 498.26 L363.56 495.30 L359.56 497.57 L356.00 491.30 Z M356.00 522.30 L359.56 516.03 L363.56 518.30 L365.24 515.34 L361.24 513.07 L364.80 506.80 L373.10 506.80 L373.10 511.40 L376.50 511.40 L376.50 506.80 L384.80 506.80 L388.36 513.07 L384.36 515.34 L386.04 518.30 L390.04 516.03 L393.60 522.30 L390.04 528.57 L386.04 526.30 L384.36 529.26 L388.36 531.53 L384.80 537.80 L376.50 537.80 L376.50 533.20 L373.10 533.20 L373.10 537.80 L364.80 537.80 L361.24 531.53 L365.24 529.26 L363.56 526.30 L359.56 528.57 L356.00 522.30 Z M389.40 446.50 L392.96 440.23 L396.96 442.50 L398.64 439.54 L394.64 437.27 L398.20 431.00 L406.50 431.00 L406.50 435.60 L409.90 435.60 L409.90 431.00 L418.20 431.00 L421.76 437.27 L417.76 439.54 L419.44 442.50 L423.44 440.23 L427.00 446.50 L423.44 452.77 L419.44 450.50 L417.76 453.46 L421.76 455.73 L418.20 462.00 L409.90 462.00 L409.90 457.40 L406.50 457.40 L406.50 462.00 L398.20 462.00 L394.64 455.73 L398.64 453.46 L396.96 450.50 L392.96 452.77 L389.40 446.50 Z M389.40 477.40 L392.96 471.13 L396.96 473.40 L398.64 470.44 L394.64 468.17 L398.20 461.90 L406.50 461.90 L406.50 466.50 L409.90 466.50 L409.90 461.90 L418.20 461.90 L421.76 468.17 L417.76 470.44 L419.44 473.40 L423.44 471.13 L427.00 477.40 L423.44 483.67 L419.44 481.40 L417.76 484.36 L421.76 486.63 L418.20 492.90 L409.90 492.90 L409.90 488.30 L406.50 488.30 L406.50 492.90 L398.20 492.90 L394.64 486.63 L398.64 484.36 L396.96 481.40 L392.96 483.67 L389.40 477.40 Z M389.40 508.30 L392.96 502.03 L396.96 504.30 L398.64 501.34 L394.64 499.07 L398.20 492.80 L406.50 492.80 L406.50 497.40 L409.90 497.40 L409.90 492.80 L418.20 492.80 L421.76 499.07 L417.76 501.34 L419.44 504.30 L423.44 502.03 L427.00 508.30 L423.44 514.57 L419.44 512.30 L417.76 515.26 L421.76 517.53 L418.20 523.80 L409.90 523.80 L409.90 519.20 L406.50 519.20 L406.50 523.80 L398.20 523.80 L394.64 517.53 L398.64 515.26 L396.96 512.30 L392.96 514.57 L389.40 508.30 Z M418.20 431.00 L421.76 424.73 L425.76 427.00 L427.44 424.04 L423.44 421.77 L427.00 415.50 L435.30 415.50 L435.30 420.10 L438.70 420.10 L438.70 415.50 L447.00 415.50 L450.56 421.77 L446.56 424.04 L448.24 427.00 L452.24 424.73 L455.80 431.00 L452.24 437.27 L448.24 435.00 L446.56 437.96 L450.56 440.23 L447.00 446.50 L438.70 446.50 L438.70 441.90 L435.30 441.90 L435.30 446.50 L427.00 446.50 L423.44 440.23 L427.44 437.96 L425.76 435.00 L421.76 437.27 L418.20 431.00 Z M418.20 462.00 L421.76 455.73 L425.76 458.00 L427.44 455.04 L423.44 452.77 L427.00 446.50 L435.30 446.50 L435.30 451.10 L438.70 451.10 L438.70 446.50 L447.00 446.50 L450.56 452.77 L446.56 455.04 L448.24 458.00 L452.24 455.73 L455.80 462.00 L452.24 468.27 L448.24 466.00 L446.56 468.96 L450.56 471.23 L447.00 477.50 L438.70 477.50 L438.70 472.90 L435.30 472.90 L435.30 477.50 L427.00 477.50 L423.44 471.23 L427.44 468.96 L425.76 466.00 L421.76 468.27 L418.20 462.00 Z M418.20 493.00 L421.76 486.73 L425.76 489.00 L427.44 486.04 L423.44 483.77 L427.00 477.50 L435.30 477.50 L435.30 482.10 L438.70 482.10 L438.70 477.50 L447.00 477.50 L450.56 483.77 L446.56 486.04 L448.24 489.00 L452.24 486.73 L455.80 493.00 L452.24 499.27 L448.24 497.00 L446.56 499.96 L450.56 502.23 L447.00 508.50 L438.70 508.50 L438.70 503.90 L435.30 503.90 L435.30 508.50 L427.00 508.50 L423.44 502.23 L427.44 499.96 L425.76 497.00 L421.76 499.27 L418.20 493.00 Z M418.20 524.00 L421.76 517.73 L425.76 520.00 L427.44 517.04 L423.44 514.77 L427.00 508.50 L435.30 508.50 L435.30 513.10 L438.70 513.10 L438.70 508.50 L447.00 508.50 L450.56 514.77 L446.56 517.04 L448.24 520.00 L452.24 517.73 L455.80 524.00 L452.24 530.27 L448.24 528.00 L446.56 530.96 L450.56 533.23 L447.00 539.50 L438.70 539.50 L438.70 534.90 L435.30 534.90 L435.30 539.50 L427.00 539.50 L423.44 533.23 L427.44 530.96 L425.76 528.00 L421.76 530.27 L418.20 524.00 Z M446.90 446.50 L450.46 440.23 L454.46 442.50 L456.14 439.54 L452.14 437.27 L455.70 431.00 L464.00 431.00 L464.00 435.60 L467.40 435.60 L467.40 431.00 L475.70 431.00 L479.26 437.27 L475.26 439.54 L476.94 442.50 L480.94 440.23 L484.50 446.50 L480.94 452.77 L476.94 450.50 L475.26 453.46 L479.26 455.73 L475.70 462.00 L467.40 462.00 L467.40 457.40 L464.00 457.40 L464.00 462.00 L455.70 462.00 L452.14 455.73 L456.14 453.46 L454.46 450.50 L450.46 452.77 L446.90 446.50 Z M446.90 477.40 L450.46 471.13 L454.46 473.40 L456.14 470.44 L452.14 468.17 L455.70 461.90 L464.00 461.90 L464.00 466.50 L467.40 466.50 L467.40 461.90 L475.70 461.90 L479.26 468.17 L475.26 470.44 L476.94 473.40 L480.94 471.13 L484.50 477.40 L480.94 483.67 L476.94 481.40 L475.26 484.36 L479.26 486.63 L475.70 492.90 L467.40 492.90 L467.40 488.30 L464.00 488.30 L464.00 492.90 L455.70 492.90 L452.14 486.63 L456.14 484.36 L454.46 481.40 L450.46 483.67 L446.90 477.40 Z M446.90 508.30 L450.46 502.03 L454.46 504.30 L456.14 501.34 L452.14 499.07 L455.70 492.80 L464.00 492.80 L464.00 497.40 L467.40 497.40 L467.40 492.80 L475.70 492.80 L479.26 499.07 L475.26 501.34 L476.94 504.30 L480.94 502.03 L484.50 508.30 L480.94 514.57 L476.94 512.30 L475.26 515.26 L479.26 517.53 L475.70 523.80 L467.40 523.80 L467.40 519.20 L464.00 519.20 L464.00 523.80 L455.70 523.80 L452.14 517.53 L456.14 515.26 L454.46 512.30 L450.46 514.57 L446.90 508.30 Z M483.30 431.50 L486.86 425.23 L490.86 427.50 L492.54 424.54 L488.54 422.27 L492.10 416.00 L500.40 416.00 L500.40 420.60 L503.80 420.60 L503.80 416.00 L512.10 416.00 L515.66 422.27 L511.66 424.54 L513.34 427.50 L517.34 425.23 L520.90 431.50 L517.34 437.77 L513.34 435.50 L511.66 438.46 L515.66 440.73 L512.10 447.00 L503.80 447.00 L503.80 442.40 L500.40 442.40 L500.40 447.00 L492.10 447.00 L488.54 440.73 L492.54 438.46 L490.86 435.50 L486.86 437.77 L483.30 431.50 Z M483.30 462.60 L486.86 456.33 L490.86 458.60 L492.54 455.64 L488.54 453.37 L492.10 447.10 L500.40 447.10 L500.40 451.70 L503.80 451.70 L503.80 447.10 L512.10 447.10 L515.66 453.37 L511.66 455.64 L513.34 458.60 L517.34 456.33 L520.90 462.60 L517.34 468.87 L513.34 466.60 L511.66 469.56 L515.66 471.83 L512.10 478.10 L503.80 478.10 L503.80 473.50 L500.40 473.50 L500.40 478.10 L492.10 478.10 L488.54 471.83 L492.54 469.56 L490.86 466.60 L486.86 468.87 L483.30 462.60 Z M483.30 493.50 L486.86 487.23 L490.86 489.50 L492.54 486.54 L488.54 484.27 L492.10 478.00 L500.40 478.00 L500.40 482.60 L503.80 482.60 L503.80 478.00 L512.10 478.00 L515.66 484.27 L511.66 486.54 L513.34 489.50 L517.34 487.23 L520.90 493.50 L517.34 499.77 L513.34 497.50 L511.66 500.46 L515.66 502.73 L512.10 509.00 L503.80 509.00 L503.80 504.40 L500.40 504.40 L500.40 509.00 L492.10 509.00 L488.54 502.73 L492.54 500.46 L490.86 497.50 L486.86 499.77 L483.30 493.50 Z M512.00 415.70 L515.56 409.43 L519.56 411.70 L521.24 408.74 L517.24 406.47 L520.80 400.20 L529.10 400.20 L529.10 404.80 L532.50 404.80 L532.50 400.20 L540.80 400.20 L544.36 406.47 L540.36 408.74 L542.04 411.70 L546.04 409.43 L549.60 415.70 L546.04 421.97 L542.04 419.70 L540.36 422.66 L544.36 424.93 L540.80 431.20 L532.50 431.20 L532.50 426.60 L529.10 426.60 L529.10 431.20 L520.80 431.20 L517.24 424.93 L521.24 422.66 L519.56 419.70 L515.56 421.97 L512.00 415.70 Z M512.00 446.80 L515.56 440.53 L519.56 442.80 L521.24 439.84 L517.24 437.57 L520.80 431.30 L529.10 431.30 L529.10 435.90 L532.50 435.90 L532.50 431.30 L540.80 431.30 L544.36 437.57 L540.36 439.84 L542.04 442.80 L546.04 440.53 L549.60 446.80 L546.04 453.07 L542.04 450.80 L540.36 453.76 L544.36 456.03 L540.80 462.30 L532.50 462.30 L532.50 457.70 L529.10 457.70 L529.10 462.30 L520.80 462.30 L517.24 456.03 L521.24 453.76 L519.56 450.80 L515.56 453.07 L512.00 446.80 Z M512.00 477.70 L515.56 471.43 L519.56 473.70 L521.24 470.74 L517.24 468.47 L520.80 462.20 L529.10 462.20 L529.10 466.80 L532.50 466.80 L532.50 462.20 L540.80 462.20 L544.36 468.47 L540.36 470.74 L542.04 473.70 L546.04 471.43 L549.60 477.70 L546.04 483.97 L542.04 481.70 L540.36 484.66 L544.36 486.93 L540.80 493.20 L532.50 493.20 L532.50 488.60 L529.10 488.60 L529.10 493.20 L520.80 493.20 L517.24 486.93 L521.24 484.66 L519.56 481.70 L515.56 483.97 L512.00 477.70 Z M512.00 508.80 L515.56 502.53 L519.56 504.80 L521.24 501.84 L517.24 499.57 L520.80 493.30 L529.10 493.30 L529.10 497.90 L532.50 497.90 L532.50 493.30 L540.80 493.30 L544.36 499.57 L540.36 501.84 L542.04 504.80 L546.04 502.53 L549.60 508.80 L546.04 515.07 L542.04 512.80 L540.36 515.76 L544.36 518.03 L540.80 524.30 L532.50 524.30 L532.50 519.70 L529.10 519.70 L529.10 524.30 L520.80 524.30 L517.24 518.03 L521.24 515.76 L519.56 512.80 L515.56 515.07 L512.00 508.80 Z M540.40 431.50 L543.96 425.23 L547.96 427.50 L549.64 424.54 L545.64 422.27 L549.20 416.00 L557.50 416.00 L557.50 420.60 L560.90 420.60 L560.90 416.00 L569.20 416.00 L572.76 422.27 L568.76 424.54 L570.44 427.50 L574.44 425.23 L578.00 431.50 L574.44 437.77 L570.44 435.50 L568.76 438.46 L572.76 440.73 L569.20 447.00 L560.90 447.00 L560.90 442.40 L557.50 442.40 L557.50 447.00 L549.20 447.00 L545.64 440.73 L549.64 438.46 L547.96 435.50 L543.96 437.77 L540.40 431.50 Z M540.40 462.60 L543.96 456.33 L547.96 458.60 L549.64 455.64 L545.64 453.37 L549.20 447.10 L557.50 447.10 L557.50 451.70 L560.90 451.70 L560.90 447.10 L569.20 447.10 L572.76 453.37 L568.76 455.64 L570.44 458.60 L574.44 456.33 L578.00 462.60 L574.44 468.87 L570.44 466.60 L568.76 469.56 L572.76 471.83 L569.20 478.10 L560.90 478.10 L560.90 473.50 L557.50 473.50 L557.50 478.10 L549.20 478.10 L545.64 471.83 L549.64 469.56 L547.96 466.60 L543.96 468.87 L540.40 462.60 Z M540.40 493.50 L543.96 487.23 L547.96 489.50 L549.64 486.54 L545.64 484.27 L549.20 478.00 L557.50 478.00 L557.50 482.60 L560.90 482.60 L560.90 478.00 L569.20 478.00 L572.76 484.27 L568.76 486.54 L570.44 489.50 L574.44 487.23 L578.00 493.50 L574.44 499.77 L570.44 497.50 L568.76 500.46 L572.76 502.73 L569.20 509.00 L560.90 509.00 L560.90 504.40 L557.50 504.40 L557.50 509.00 L549.20 509.00 L545.64 502.73 L549.64 500.46 L547.96 497.50 L543.96 499.77 L540.40 493.50 Z" fill="none" stroke="#000" stroke-width="0.9"/>
<g fill="none" stroke="#000" stroke-width="0.9"><circle cx="317.6" cy="460.8" r="3.9"/><circle cx="317.6" cy="491.8" r="3.9"/><circle cx="317.6" cy="522.7" r="3.9"/><circle cx="346.4" cy="444.9" r="3.9"/><circle cx="346.4" cy="475.9" r="3.9"/><circle cx="346.4" cy="506.8" r="3.9"/><circle cx="346.4" cy="537.7" r="3.9"/><circle cx="374.8" cy="460.4" r="3.9"/><circle cx="374.8" cy="491.3" r="3.9"/><circle cx="374.8" cy="522.3" r="3.9"/><circle cx="408.2" cy="446.5" r="3.9"/><circle cx="408.2" cy="477.4" r="3.9"/><circle cx="408.2" cy="508.3" r="3.9"/><circle cx="437.0" cy="431.0" r="3.9"/><circle cx="437.0" cy="462.0" r="3.9"/><circle cx="437.0" cy="493.0" r="3.9"/><circle cx="437.0" cy="524.0" r="3.9"/><circle cx="465.7" cy="446.5" r="3.9"/><circle cx="465.7" cy="477.4" r="3.9"/><circle cx="465.7" cy="508.3" r="3.9"/><circle cx="502.1" cy="431.5" r="3.9"/><circle cx="502.1" cy="462.6" r="3.9"/><circle cx="502.1" cy="493.5" r="3.9"/><circle cx="530.8" cy="415.7" r="3.9"/><circle cx="530.8" cy="446.8" r="3.9"/><circle cx="530.8" cy="477.7" r="3.9"/><circle cx="530.8" cy="508.8" r="3.9"/><circle cx="559.2" cy="431.5" r="3.9"/><circle cx="559.2" cy="462.6" r="3.9"/><circle cx="559.2" cy="493.5" r="3.9"/></g>
<path d="M582.83 403.60 L588.57 395.70 L592.13 398.28 L593.89 395.86 L590.33 393.27 L596.08 385.37 L605.37 388.39 L604.01 392.57 L606.86 393.50 L608.22 389.31 L617.51 392.33 L617.51 402.10 L613.11 402.10 L613.11 405.10 L617.51 405.10 L617.51 414.87 L608.22 417.89 L606.86 413.70 L604.01 414.63 L605.37 418.81 L596.08 421.83 L590.33 413.93 L593.89 411.34 L592.13 408.92 L588.57 411.50 L582.83 403.60 Z M652.19 403.60 L646.45 411.50 L642.89 408.92 L641.12 411.34 L644.68 413.93 L638.94 421.83 L629.65 418.81 L631.01 414.63 L628.16 413.70 L626.80 417.89 L617.51 414.87 L617.51 405.10 L621.91 405.10 L621.91 402.10 L617.51 402.10 L617.51 392.33 L626.80 389.31 L628.16 393.50 L631.01 392.57 L629.65 388.39 L638.94 385.37 L644.68 393.27 L641.12 395.86 L642.89 398.28 L646.45 395.70 L652.19 403.60 Z M604.26 433.10 L610.00 425.20 L613.56 427.78 L615.33 425.36 L611.77 422.77 L617.51 414.87 L626.80 417.89 L625.44 422.07 L628.29 423.00 L629.65 418.81 L638.94 421.83 L638.94 431.60 L634.54 431.60 L634.54 434.60 L638.94 434.60 L638.94 444.37 L629.65 447.39 L628.29 443.20 L625.44 444.13 L626.80 448.31 L617.51 451.33 L611.77 443.43 L615.33 440.84 L613.56 438.42 L610.00 441.00 L604.26 433.10 Z M673.62 433.10 L667.88 441.00 L664.32 438.42 L662.56 440.84 L666.12 443.43 L660.37 451.33 L651.08 448.31 L652.44 444.13 L649.59 443.20 L648.23 447.39 L638.94 444.37 L638.94 434.60 L643.34 434.60 L643.34 431.60 L638.94 431.60 L638.94 421.83 L648.23 418.81 L649.59 423.00 L652.44 422.07 L651.08 417.89 L660.37 414.87 L666.12 422.77 L662.56 425.36 L664.32 427.78 L667.88 425.20 L673.62 433.10 Z M582.83 462.60 L588.57 454.70 L592.13 457.29 L593.89 454.86 L590.33 452.27 L596.08 444.37 L605.37 447.39 L604.01 451.57 L606.86 452.50 L608.22 448.32 L617.51 451.33 L617.51 461.10 L613.11 461.10 L613.11 464.10 L617.51 464.10 L617.51 473.87 L608.22 476.89 L606.86 472.70 L604.01 473.63 L605.37 477.81 L596.08 480.83 L590.33 472.93 L593.89 470.34 L592.13 467.92 L588.57 470.50 L582.83 462.60 Z M652.19 462.60 L646.45 470.50 L642.89 467.92 L641.12 470.34 L644.68 472.93 L638.94 480.83 L629.65 477.81 L631.01 473.63 L628.16 472.70 L626.80 476.89 L617.51 473.87 L617.51 464.10 L621.91 464.10 L621.91 461.10 L617.51 461.10 L617.51 451.33 L626.80 448.32 L628.16 452.50 L631.01 451.57 L629.65 447.39 L638.94 444.37 L644.68 452.27 L641.12 454.86 L642.89 457.29 L646.45 454.70 L652.19 462.60 Z M604.26 492.10 L610.00 484.20 L613.56 486.79 L615.33 484.36 L611.77 481.77 L617.51 473.87 L626.80 476.89 L625.44 481.07 L628.29 482.00 L629.65 477.82 L638.94 480.83 L638.94 490.60 L634.54 490.60 L634.54 493.60 L638.94 493.60 L638.94 503.37 L629.65 506.39 L628.29 502.20 L625.44 503.13 L626.80 507.32 L617.51 510.33 L611.77 502.43 L615.33 499.85 L613.56 497.42 L610.00 500.00 L604.26 492.10 Z M673.62 492.10 L667.88 500.00 L664.32 497.42 L662.56 499.85 L666.12 502.43 L660.37 510.33 L651.08 507.32 L652.44 503.13 L649.59 502.20 L648.23 506.39 L638.94 503.37 L638.94 493.60 L643.34 493.60 L643.34 490.60 L638.94 490.60 L638.94 480.83 L648.23 477.82 L649.59 482.00 L652.44 481.07 L651.08 476.89 L660.37 473.87 L666.12 481.77 L662.56 484.36 L664.32 486.79 L667.88 484.20 L673.62 492.10 Z M582.83 521.60 L588.57 513.70 L592.13 516.29 L593.89 513.86 L590.33 511.27 L596.08 503.37 L605.37 506.39 L604.01 510.57 L606.86 511.50 L608.22 507.32 L617.51 510.34 L617.51 520.10 L613.11 520.10 L613.11 523.10 L617.51 523.10 L617.51 532.87 L608.22 535.89 L606.86 531.70 L604.01 532.63 L605.37 536.82 L596.08 539.83 L590.33 531.93 L593.89 529.35 L592.13 526.92 L588.57 529.51 L582.83 521.60 Z M652.19 521.60 L646.45 529.51 L642.89 526.92 L641.12 529.35 L644.68 531.93 L638.94 539.83 L629.65 536.82 L631.01 532.63 L628.16 531.70 L626.80 535.89 L617.51 532.87 L617.51 523.10 L621.91 523.10 L621.91 520.10 L617.51 520.10 L617.51 510.34 L626.80 507.32 L628.16 511.50 L631.01 510.57 L629.65 506.39 L638.94 503.37 L644.68 511.27 L641.12 513.86 L642.89 516.29 L646.45 513.70 L652.19 521.60 Z" fill="none" stroke="#000" stroke-width="0.9"/>
<path d="M607.00 403.60 L606.83 404.89 L604.42 405.00 L603.98 405.58 L604.50 407.93 L603.29 408.43 L602.00 406.40 L601.28 406.30 L599.50 407.93 L598.46 407.14 L599.58 405.00 L599.30 404.32 L597.00 403.60 L597.17 402.31 L599.58 402.20 L600.02 401.62 L599.50 399.27 L600.71 398.77 L602.00 400.80 L602.72 400.90 L604.50 399.27 L605.54 400.06 L604.42 402.20 L604.70 402.88 Z M638.02 403.60 L637.85 404.89 L635.44 405.00 L635.00 405.58 L635.52 407.93 L634.31 408.43 L633.02 406.40 L632.29 406.30 L630.52 407.93 L629.48 407.14 L630.59 405.00 L630.31 404.32 L628.02 403.60 L628.19 402.31 L630.59 402.20 L631.04 401.62 L630.52 399.27 L631.72 398.77 L633.02 400.80 L633.74 400.90 L635.52 399.27 L636.55 400.06 L635.44 402.20 L635.72 402.88 Z M628.43 433.10 L628.26 434.39 L625.86 434.50 L625.41 435.08 L625.93 437.43 L624.73 437.93 L623.43 435.90 L622.71 435.81 L620.93 437.43 L619.90 436.64 L621.01 434.50 L620.73 433.83 L618.43 433.10 L618.60 431.81 L621.01 431.70 L621.45 431.12 L620.93 428.77 L622.14 428.27 L623.43 430.30 L624.16 430.40 L625.93 428.77 L626.97 429.57 L625.86 431.70 L626.14 432.38 Z M659.45 433.10 L659.28 434.39 L656.88 434.50 L656.43 435.08 L656.95 437.43 L655.74 437.93 L654.45 435.90 L653.73 435.81 L651.95 437.43 L650.91 436.64 L652.03 434.50 L651.75 433.83 L649.45 433.10 L649.62 431.81 L652.03 431.70 L652.47 431.12 L651.95 428.77 L653.16 428.27 L654.45 430.30 L655.18 430.40 L656.95 428.77 L657.99 429.57 L656.88 431.70 L657.16 432.38 Z M607.00 462.60 L606.83 463.90 L604.42 464.00 L603.98 464.58 L604.50 466.93 L603.29 467.43 L602.00 465.40 L601.28 465.31 L599.50 466.93 L598.46 466.14 L599.58 464.00 L599.30 463.33 L597.00 462.60 L597.17 461.31 L599.58 461.20 L600.02 460.62 L599.50 458.27 L600.71 457.77 L602.00 459.80 L602.72 459.90 L604.50 458.27 L605.54 459.07 L604.42 461.20 L604.70 461.88 Z M638.02 462.60 L637.85 463.90 L635.44 464.00 L635.00 464.58 L635.52 466.93 L634.31 467.43 L633.02 465.40 L632.29 465.31 L630.52 466.93 L629.48 466.14 L630.59 464.00 L630.31 463.33 L628.02 462.60 L628.19 461.31 L630.59 461.20 L631.04 460.62 L630.52 458.27 L631.72 457.77 L633.02 459.80 L633.74 459.90 L635.52 458.27 L636.55 459.07 L635.44 461.20 L635.72 461.88 Z M628.43 492.10 L628.26 493.40 L625.86 493.50 L625.41 494.08 L625.93 496.43 L624.73 496.93 L623.43 494.90 L622.71 494.81 L620.93 496.43 L619.90 495.64 L621.01 493.50 L620.73 492.83 L618.43 492.10 L618.60 490.81 L621.01 490.70 L621.45 490.12 L620.93 487.77 L622.14 487.27 L623.43 489.30 L624.16 489.40 L625.93 487.77 L626.97 488.57 L625.86 490.70 L626.14 491.38 Z M659.45 492.10 L659.28 493.40 L656.88 493.50 L656.43 494.08 L656.95 496.43 L655.74 496.93 L654.45 494.90 L653.73 494.81 L651.95 496.43 L650.91 495.64 L652.03 493.50 L651.75 492.83 L649.45 492.10 L649.62 490.81 L652.03 490.70 L652.47 490.12 L651.95 487.77 L653.16 487.27 L654.45 489.30 L655.18 489.40 L656.95 487.77 L657.99 488.57 L656.88 490.70 L657.16 491.38 Z M607.00 521.60 L606.83 522.90 L604.42 523.00 L603.98 523.58 L604.50 525.93 L603.29 526.43 L602.00 524.40 L601.28 524.31 L599.50 525.93 L598.46 525.14 L599.58 523.00 L599.30 522.33 L597.00 521.60 L597.17 520.31 L599.58 520.20 L600.02 519.62 L599.50 517.27 L600.71 516.77 L602.00 518.80 L602.72 518.90 L604.50 517.27 L605.54 518.07 L604.42 520.20 L604.70 520.88 Z M638.02 521.60 L637.85 522.90 L635.44 523.00 L635.00 523.58 L635.52 525.93 L634.31 526.43 L633.02 524.40 L632.29 524.31 L630.52 525.93 L629.48 525.14 L630.59 523.00 L630.31 522.33 L628.02 521.60 L628.19 520.31 L630.59 520.20 L631.04 519.62 L630.52 517.27 L631.72 516.77 L633.02 518.80 L633.74 518.90 L635.52 517.27 L636.55 518.07 L635.44 520.20 L635.72 520.88 Z" fill="none" stroke="#000" stroke-width="0.8"/>
<rect x="665.5" y="264.5" width="15" height="15" fill="#00fa00" stroke="#000" stroke-width="1" shape-rendering="crispEdges"/>
</svg>
<div class="a" style="left:908px;top:139px;width:18px;height:463px;background:#f0f0f0"></div>
<div class="a" style="left:57px;top:602px;width:869px;height:18px;background:#f0f0f0"></div>
<div class="a" style="left:909px;top:321px;width:15px;height:17px;background:#cdcdcd"></div>
<div class="a" style="left:597px;top:603px;width:17px;height:15px;background:#cdcdcd"></div>
<svg class="a" style="left:907px;top:138px" width="19" height="464" viewBox="0 0 19 464">
<path d="M6 13.5 L9.5 10 L13 13.5" stroke="#555" stroke-width="2" fill="none"/>
<path d="M6 453.5 L9.5 457 L13 453.5" stroke="#555" stroke-width="2" fill="none"/></svg>
<svg class="a" style="left:57px;top:602px" width="868" height="17" viewBox="0 0 868 17">
<path d="M10.5 5 L7 8.5 L10.5 12" stroke="#555" stroke-width="2" fill="none"/>
<path d="M841 5 L844.5 8.5 L841 12" stroke="#555" stroke-width="2" fill="none"/></svg>
<div class="a" style="left:5px;top:621px;width:920px;height:31px;background:#f0f0f0"></div>
<div class="a" style="left:5px;top:619px;width:922px;height:2px;border-top:1px solid #dadada;border-bottom:1px solid #fbfbfb"></div>
<div class="a" style="left:25.5px;top:625px;width:22px;height:24px;background:#000000;border:1px solid rgba(0,0,0,.15);border-right:none;border-bottom:none"></div>
<div class="a" style="left:51.0px;top:625px;width:22px;height:24px;background:#0000ff;border:1px solid rgba(0,0,0,.15);border-right:none;border-bottom:none"></div>
<div class="a" style="left:76.5px;top:625px;width:22px;height:24px;background:#ff0000;border:1px solid rgba(0,0,0,.15);border-right:none;border-bottom:none"></div>
<div class="a" style="left:102.0px;top:625px;width:22px;height:24px;background:#00e800;border:1px solid rgba(0,0,0,.15);border-right:none;border-bottom:none"></div>
<div class="a" style="left:127.5px;top:625px;width:22px;height:24px;background:#f88070;border:1px solid rgba(0,0,0,.15);border-right:none;border-bottom:none"></div>
<div class="a" style="left:153.0px;top:625px;width:22px;height:24px;background:#ffff00;border:1px solid rgba(0,0,0,.15);border-right:none;border-bottom:none"></div>
<div class="a" style="left:178.5px;top:625px;width:22px;height:24px;background:#1e90ff;border:1px solid rgba(0,0,0,.15);border-right:none;border-bottom:none"></div>
<div class="a" style="left:204.0px;top:625px;width:22px;height:24px;background:#8b3a10;border:1px solid rgba(0,0,0,.15);border-right:none;border-bottom:none"></div>
<div class="a" style="left:229.5px;top:625px;width:22px;height:24px;background:#808000;border:1px solid rgba(0,0,0,.15);border-right:none;border-bottom:none"></div>
<div class="a" style="left:255.0px;top:625px;width:22px;height:24px;background:#008060;border:1px solid rgba(0,0,0,.15);border-right:none;border-bottom:none"></div>
<div class="a" style="left:280.5px;top:625px;width:22px;height:24px;background:#ff4500;border:1px solid rgba(0,0,0,.15);border-right:none;border-bottom:none"></div>
<div class="a" style="left:306.0px;top:625px;width:22px;height:24px;background:#400080;border:1px solid rgba(0,0,0,.15);border-right:none;border-bottom:none"></div>
<div class="a" style="left:331.5px;top:625px;width:22px;height:24px;background:#ffd0dc;border:1px solid rgba(0,0,0,.15);border-right:none;border-bottom:none"></div>
<div class="a" style="left:357.0px;top:625px;width:22px;height:24px;background:#b0a0f4;border:1px solid rgba(0,0,0,.15);border-right:none;border-bottom:none"></div>
<div class="a" style="left:382.5px;top:625px;width:22px;height:24px;background:#d0f8a0;border:1px solid rgba(0,0,0,.15);border-right:none;border-bottom:none"></div>
<div class="a" style="left:408.0px;top:625px;width:22px;height:24px;background:#f89058;border:1px solid rgba(0,0,0,.15);border-right:none;border-bottom:none"></div>
<div class="a" style="left:433.5px;top:625px;width:22px;height:24px;background:#dc7098;border:1px solid rgba(0,0,0,.15);border-right:none;border-bottom:none"></div>
<div class="a" style="left:459.0px;top:625px;width:22px;height:24px;background:#8870dc;border:1px solid rgba(0,0,0,.15);border-right:none;border-bottom:none"></div>
<div class="a" style="left:484.5px;top:625px;width:22px;height:24px;background:#78dc78;border:1px solid rgba(0,0,0,.15);border-right:none;border-bottom:none"></div>
<div class="a" style="left:510.0px;top:625px;width:22px;height:24px;background:#b4a070;border:1px solid rgba(0,0,0,.15);border-right:none;border-bottom:none"></div>
<svg class="a" style="left:8px;top:626px" width="8" height="8" viewBox="0 0 8 8"><path d="M1.5 1.8 L6.5 6.8 M6.5 1.8 L1.5 6.8" stroke="#000" stroke-width="1.6"/></svg>
<div class="a" style="left:10px;top:640px;width:1px;height:7px;background:#b0b0b0"></div><div class="a" style="left:13px;top:640px;width:1px;height:7px;background:#b0b0b0"></div>
<div class="a" style="left:5px;top:652px;width:1218px;height:23px;background:#f0f0f0;border-top:1px solid #d4d4d4"></div>
<div class="a" style="left:6px;top:655px;width:1016px;height:19px;border:1px solid #c8c8c8;border-right-color:#fff;border-bottom-color:#fff"></div>
<div class="a" style="left:1024px;top:655px;width:4px;height:19px;border:1px solid #c8c8c8;border-right-color:#fff;border-bottom-color:#fff"></div>
<div class="a" style="left:1030px;top:655px;width:174px;height:19px;border:1px solid #c8c8c8;border-right-color:#fff;border-bottom-color:#fff"></div>
<div class="lbl" style="left:7.5px;top:659.1px;font-size:12px;line-height:1;letter-spacing:-0.072px;color:#000;">--- *Welcome to use the Laser system of cutting,Propose the display area 1024*768 or higher *---</div>
<div class="lbl" style="left:1032.6px;top:659.1px;font-size:12px;line-height:1;letter-spacing:-0.291px;color:#000;">X:2.815mm,Y:579.267mm</div>
<div class="a" style="left:1219px;top:672px;width:2px;height:2px;background:#bfbfbf"></div>
<div class="a" style="left:1216px;top:672px;width:2px;height:2px;background:#bfbfbf"></div>
<div class="a" style="left:1213px;top:672px;width:2px;height:2px;background:#bfbfbf"></div>
<div class="a" style="left:1219px;top:669px;width:2px;height:2px;background:#bfbfbf"></div>
<div class="a" style="left:1216px;top:669px;width:2px;height:2px;background:#bfbfbf"></div>
<div class="a" style="left:1219px;top:666px;width:2px;height:2px;background:#bfbfbf"></div>
<div class="a" style="left:926px;top:121px;width:297px;height:498px;background:#f0f0f0"></div>
<div class="a" style="left:926px;top:121px;width:1px;height:498px;background:#dadada"></div>
<div class="a" style="left:931px;top:127px;width:273px;height:3px;border-top:1px solid #a8a8a8;border-left:1px solid #a8a8a8;border-bottom:1px solid #fff;border-right:1px solid #fff"></div>
<div class="a" style="left:931px;top:130px;width:273px;height:3px;border-top:1px solid #a8a8a8;border-left:1px solid #a8a8a8;border-bottom:1px solid #fff;border-right:1px solid #fff"></div>
<svg class="a" style="left:1209px;top:124px" width="8" height="8" viewBox="0 0 8 8"><path d="M1.4 1.4 L6.6 6.6 M6.6 1.4 L1.4 6.6" stroke="#000" stroke-width="1.6"/></svg>
<div class="tab" style="left:978px;width:44px"></div>
<div class="lbl" style="left:982.1px;top:142.7px;font-size:11px;line-height:1;letter-spacing:0.020px;color:#000;">Output</div>
<div class="tab" style="left:1021px;width:43px"></div>
<div class="lbl" style="left:1027.7px;top:142.7px;font-size:11px;line-height:1;letter-spacing:-0.790px;color:#000;">Doc</div>
<div class="tab" style="left:1063px;width:43px"></div>
<div class="lbl" style="left:1069.8px;top:142.7px;font-size:11px;line-height:1;letter-spacing:-0.903px;color:#000;">User</div>
<div class="tab" style="left:1105px;width:42px"></div>
<div class="lbl" style="left:1112.3px;top:142.7px;font-size:11px;line-height:1;letter-spacing:-0.047px;color:#000;">Test</div>
<div class="tab" style="left:1146px;width:62px"></div>
<div class="lbl" style="left:1154.2px;top:142.7px;font-size:11px;line-height:1;letter-spacing:-0.178px;color:#000;">Transform</div>
<div class="tab" style="left:932px;top:136px;width:47px;height:23px;background:#fff;z-index:2"></div>
<div class="a" style="left:935px;top:158px;width:280px;height:178px;background:#fff;border:1px solid #828790"></div>
<div class="a" style="left:933px;top:158px;width:45px;height:1px;background:#fff;z-index:3"></div>
<div class="a" style="z-index:4">
<div class="lbl" style="left:940.0px;top:140.7px;font-size:11px;line-height:1;letter-spacing:-0.407px;color:#000;">Work</div>
</div>
<div class="lbl" style="left:943.8px;top:167.7px;font-size:11px;line-height:1;letter-spacing:-0.425px;color:#000;">Layer</div>
<div class="a" style="left:987px;top:160px;width:1px;height:24px;background:#e5e5e5"></div>
<div class="a" style="left:987px;top:184px;width:1px;height:151px;background:#f0f0f0"></div>
<div class="lbl" style="left:1004.6px;top:167.7px;font-size:11px;line-height:1;letter-spacing:-0.633px;color:#000;">Mode</div>
<div class="a" style="left:1047px;top:160px;width:1px;height:24px;background:#e5e5e5"></div>
<div class="a" style="left:1047px;top:184px;width:1px;height:151px;background:#f0f0f0"></div>
<div class="lbl" style="left:1059.7px;top:167.7px;font-size:11px;line-height:1;letter-spacing:-0.623px;color:#000;">Speed</div>
<div class="a" style="left:1102px;top:160px;width:1px;height:24px;background:#e5e5e5"></div>
<div class="a" style="left:1102px;top:184px;width:1px;height:151px;background:#f0f0f0"></div>
<div class="lbl" style="left:1114.6px;top:167.7px;font-size:11px;line-height:1;letter-spacing:-0.532px;color:#000;">Power</div>
<div class="a" style="left:1157px;top:160px;width:1px;height:24px;background:#e5e5e5"></div>
<div class="a" style="left:1157px;top:184px;width:1px;height:151px;background:#f0f0f0"></div>
<div class="lbl" style="left:1167.4px;top:167.7px;font-size:11px;line-height:1;letter-spacing:0.160px;color:#000;">Output</div>
<div class="a" style="left:1213px;top:160px;width:1px;height:24px;background:#e5e5e5"></div>
<div class="a" style="left:1213px;top:184px;width:1px;height:151px;background:#f0f0f0"></div>
<div class="a" style="left:936px;top:201.0px;width:278px;height:1px;background:#f0f0f0"></div>
<div class="a" style="left:936px;top:217.9px;width:278px;height:1px;background:#f0f0f0"></div>
<div class="a" style="left:936px;top:234.8px;width:278px;height:1px;background:#f0f0f0"></div>
<div class="a" style="left:936px;top:251.7px;width:278px;height:1px;background:#f0f0f0"></div>
<div class="a" style="left:936px;top:268.6px;width:278px;height:1px;background:#f0f0f0"></div>
<div class="a" style="left:936px;top:285.5px;width:278px;height:1px;background:#f0f0f0"></div>
<div class="a" style="left:936px;top:302.4px;width:278px;height:1px;background:#f0f0f0"></div>
<div class="a" style="left:936px;top:319.3px;width:278px;height:1px;background:#f0f0f0"></div>
<div class="a" style="left:938px;top:185px;width:49px;height:16px;background:#000"></div>
<div class="lbl" style="left:1008.9px;top:187.0px;font-size:12.5px;line-height:1;letter-spacing:-0.750px;color:#000;">Cut</div>
<div class="lbl" style="left:1063.2px;top:187.0px;font-size:12.5px;line-height:1;letter-spacing:-0.092px;color:#000;">15.0</div>
<div class="lbl" style="left:1117.8px;top:187.0px;font-size:12.5px;line-height:1;letter-spacing:-0.092px;color:#000;">75.0</div>
<div class="lbl" style="left:1176.2px;top:187.0px;font-size:12.5px;line-height:1;letter-spacing:-0.788px;color:#000;">Yes</div>
<div class="btn" style="left:990px;top:343px;width:73px;height:18px;background:#e1e1e1;border:2px solid #0078d7"></div>
<div class="btn" style="left:1075px;top:343px;width:73px;height:18px;background:#e1e1e1;border:1px solid #adadad"></div>
<div class="lbl" style="left:1019.7px;top:347.0px;font-size:11px;line-height:1;letter-spacing:-1.580px;color:#000;">Up</div>
<div class="lbl" style="left:1097.8px;top:347.0px;font-size:11px;line-height:1;letter-spacing:-0.620px;color:#000;">Down</div>
<div class="a" style="left:936px;top:365px;width:276px;height:2px;border-top:1px solid #a0a0a0;border-bottom:1px solid #fff"></div>
<div class="a" style="left:936px;top:380px;width:279px;height:106px;border:1px solid #dcdcdc"></div>
<div class="a" style="left:942px;top:378px;width:91px;height:5px;background:#f0f0f0"></div>
<div class="lbl" style="left:945.0px;top:374.5px;font-size:11px;line-height:1;letter-spacing:-0.257px;color:#000;">Line/column setup</div>
<div class="lbl" style="left:986.4px;top:392.1px;font-size:11px;line-height:1;letter-spacing:-1.255px;color:#000;">Num</div>
<div class="lbl" style="left:1036.9px;top:392.1px;font-size:11px;line-height:1;letter-spacing:-0.568px;color:#000;">space</div>
<div class="lbl" style="left:1079.8px;top:392.1px;font-size:11px;line-height:1;letter-spacing:-0.319px;color:#000;">Dislocation</div>
<div class="lbl" style="left:1156.7px;top:392.1px;font-size:11px;line-height:1;letter-spacing:-0.342px;color:#000;">Mirror</div>
<div class="lbl" style="left:953.3px;top:415.4px;font-size:11px;line-height:1;letter-spacing:-0.540px;color:#000;">X:</div>
<div class="lbl" style="left:953.3px;top:436.4px;font-size:11px;line-height:1;letter-spacing:0.010px;color:#000;">Y:</div>
<div class="inp" style="left:971px;top:410px;width:52px;height:19px;border-color:#d4d4d4;background:#f2f2f2"></div>
<div class="lbl" style="left:978.0px;top:413.5px;font-size:11.5px;line-height:1;letter-spacing:0.000px;color:#7a7a7a;">1</div>
<div class="inp" style="left:1025px;top:410px;width:52px;height:19px;border-color:#d4d4d4;background:#f2f2f2"></div>
<div class="lbl" style="left:1030.7px;top:413.5px;font-size:11.5px;line-height:1;letter-spacing:-0.438px;color:#7a7a7a;">0.000</div>
<div class="inp" style="left:1079px;top:410px;width:52px;height:19px;border-color:#d4d4d4;background:#f2f2f2"></div>
<div class="lbl" style="left:1084.8px;top:413.5px;font-size:11.5px;line-height:1;letter-spacing:-0.438px;color:#7a7a7a;">0.000</div>
<div class="inp" style="left:971px;top:431px;width:52px;height:19px;border-color:#d4d4d4;background:#f2f2f2"></div>
<div class="lbl" style="left:978.0px;top:434.5px;font-size:11.5px;line-height:1;letter-spacing:0.000px;color:#7a7a7a;">1</div>
<div class="inp" style="left:1025px;top:431px;width:52px;height:19px;border-color:#d4d4d4;background:#f2f2f2"></div>
<div class="lbl" style="left:1030.7px;top:434.5px;font-size:11.5px;line-height:1;letter-spacing:-0.438px;color:#7a7a7a;">0.000</div>
<div class="inp" style="left:1079px;top:431px;width:52px;height:19px;border-color:#d4d4d4;background:#f2f2f2"></div>
<div class="lbl" style="left:1084.8px;top:434.5px;font-size:11.5px;line-height:1;letter-spacing:-0.438px;color:#7a7a7a;">0.000</div>
<div class="a" style="left:1133px;top:409px;width:77px;height:42px;border:1px solid #555"></div>
<div class="a" style="left:1139px;top:414px;width:12px;height:12px;background:#f8f8f8;border:1px solid #d0d0d0"></div>
<div class="lbl" style="left:1154.9px;top:414.7px;font-size:11px;line-height:1;letter-spacing:0.000px;color:#8a8a8a;">H</div>
<div class="a" style="left:1175px;top:414px;width:12px;height:12px;background:#f8f8f8;border:1px solid #d0d0d0"></div>
<div class="lbl" style="left:1191.0px;top:414.7px;font-size:11px;line-height:1;letter-spacing:0.000px;color:#8a8a8a;">V</div>
<div class="a" style="left:1139px;top:434px;width:12px;height:12px;background:#f8f8f8;border:1px solid #d0d0d0"></div>
<div class="lbl" style="left:1154.9px;top:435.2px;font-size:11px;line-height:1;letter-spacing:0.000px;color:#8a8a8a;">H</div>
<div class="a" style="left:1175px;top:434px;width:12px;height:12px;background:#f8f8f8;border:1px solid #d0d0d0"></div>
<div class="lbl" style="left:1191.0px;top:435.2px;font-size:11px;line-height:1;letter-spacing:0.000px;color:#8a8a8a;">V</div>
<div class="btn" style="left:972px;top:455px;width:79px;height:23px;background:#cccccc"></div>
<div class="lbl" style="left:982.1px;top:461.4px;font-size:11px;line-height:1;letter-spacing:-0.122px;color:#838383;">Virtual array</div>
<div class="btn" style="left:1054px;top:455px;width:76px;height:23px;background:#cccccc"></div>
<div class="lbl" style="left:1065.7px;top:461.4px;font-size:11px;line-height:1;letter-spacing:0.201px;color:#838383;">Bestrew...</div>
<div class="btn" style="left:1134px;top:455px;width:76px;height:23px;background:#cccccc"></div>
<div class="lbl" style="left:1155.9px;top:461.4px;font-size:11px;line-height:1;letter-spacing:0.044px;color:#838383;">Adjust</div>
<svg class="a" style="left:944px;top:454px" width="26" height="26" viewBox="0 0 26 26"><rect x="0.5" y="0.5" width="24" height="24" fill="#fff" stroke="#000"/><path d="M0 25.5 H26 M25.5 0 V26" stroke="#000" stroke-width="1"/><path d="M4 4 H20 M18 2.5 L20.5 4 L18 5.5 M4 4 V21 M2.5 19 L4 21.5 L5.5 19" stroke="#000" stroke-width="1" fill="none"/><rect x="2.5" y="2.5" width="3" height="3" fill="#00c"/><rect x="7.5" y="7.5" width="3.5" height="3.5" fill="#0ee" stroke="#000" stroke-width="1"/><rect x="12.5" y="7.5" width="3.5" height="3.5" fill="#0ee" stroke="#000" stroke-width="1"/><rect x="17.5" y="7.5" width="3.5" height="3.5" fill="#0ee" stroke="#000" stroke-width="1"/><rect x="7.5" y="12.5" width="3.5" height="3.5" fill="#0ee" stroke="#000" stroke-width="1"/><rect x="12.5" y="12.5" width="3.5" height="3.5" fill="#0ee" stroke="#000" stroke-width="1"/><rect x="17.5" y="12.5" width="3.5" height="3.5" fill="#0ee" stroke="#000" stroke-width="1"/><rect x="7.5" y="17.5" width="3.5" height="3.5" fill="#0ee" stroke="#000" stroke-width="1"/><rect x="12.5" y="17.5" width="3.5" height="3.5" fill="#0ee" stroke="#000" stroke-width="1"/><rect x="17.5" y="17.5" width="3.5" height="3.5" fill="#0ee" stroke="#000" stroke-width="1"/></svg>
<div class="a" style="left:932px;top:158px;width:286px;height:337px;border:1px solid #fcfcfc;border-top:none;background:transparent"></div>
<div class="a" style="left:932px;top:158px;width:1px;height:336px;background:#dcdcdc"></div>
<div class="a" style="left:927px;top:580px;width:296px;height:2px;border-top:1px solid #a8a8a8;border-bottom:1px solid #fff"></div>
<div class="a" style="left:931px;top:588px;width:273px;height:3px;border-top:1px solid #a8a8a8;border-left:1px solid #a8a8a8;border-bottom:1px solid #fff;border-right:1px solid #fff"></div>
<div class="a" style="left:931px;top:591px;width:273px;height:3px;border-top:1px solid #a8a8a8;border-left:1px solid #a8a8a8;border-bottom:1px solid #fff;border-right:1px solid #fff"></div>
<svg class="a" style="left:1209px;top:585px" width="8" height="8" viewBox="0 0 8 8"><path d="M1.4 1.4 L6.6 6.6 M6.6 1.4 L1.4 6.6" stroke="#000" stroke-width="1.6"/></svg>
<div class="a" style="left:933px;top:603px;width:287px;height:16px;border:1px solid #dcdcdc;border-bottom:none"></div>
<div class="a" style="left:939px;top:601px;width:57px;height:5px;background:#f0f0f0"></div>
<div class="lbl" style="left:941.7px;top:598.5px;font-size:11px;line-height:1;letter-spacing:-0.222px;color:#000;">Laser work</div>
<div class="a" style="left:943px;top:614px;width:90px;height:2px;border-top:1px solid #b4b4b4;border-left:1px solid #b4b4b4"></div>
<div class="a" style="left:1036px;top:614px;width:98px;height:2px;border-top:1px solid #b4b4b4;border-left:1px solid #b4b4b4"></div>
<div class="a" style="left:1138px;top:614px;width:70px;height:2px;border-top:1px solid #b4b4b4;border-left:1px solid #b4b4b4"></div>
<div class="a" style="left:927px;top:619px;width:296px;height:1px;background:#b0b0b0"></div>
<div class="a" style="left:926px;top:121px;width:6px;height:459px;background:#f6f6f6"></div>
<div class="a" style="left:922px;top:581px;width:5px;height:39px;background:#f8f8f8"></div>
</body></html>
